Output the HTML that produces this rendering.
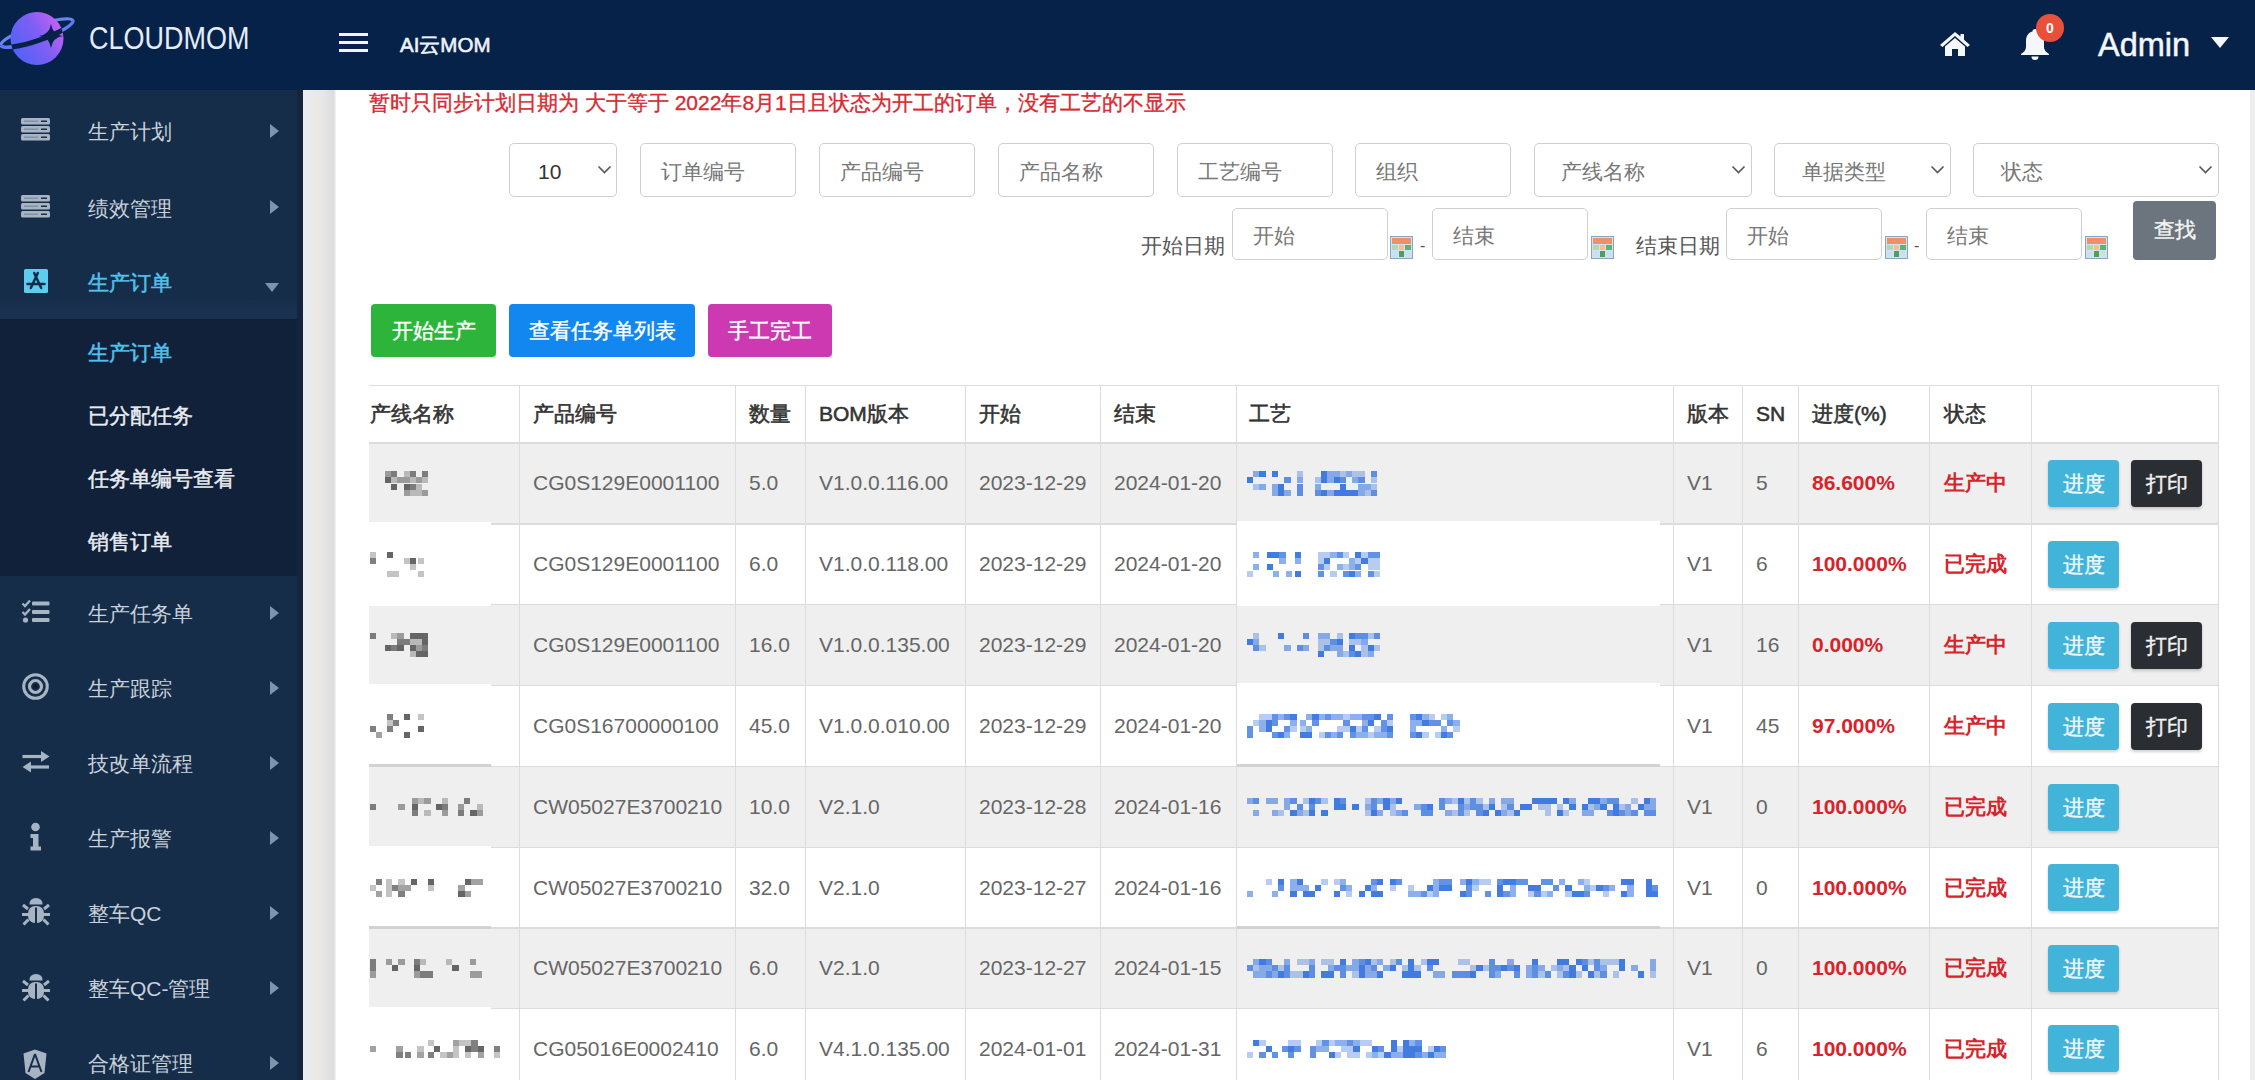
<!DOCTYPE html>
<html><head><meta charset="utf-8">
<style>
*{box-sizing:border-box;margin:0;padding:0}
html,body{width:2255px;height:1080px;overflow:hidden;background:#fff;font-family:"Liberation Sans",sans-serif}
.abs{position:absolute}
#hdr{position:absolute;left:0;top:0;width:2255px;height:90px;background:#072249}
#side{position:absolute;left:0;top:90px;width:303px;height:990px;background:#152d48}
#sub{position:absolute;left:0;top:319px;width:303px;height:257px;background:#11213a}
#gstrip{position:absolute;left:303px;top:90px;width:33px;height:990px;background:linear-gradient(to right,#e9edf1 0,#ebe8e4 40%,#e6e6e8 65%,#dcdcdc 92%,#f4f4f4 100%)}
#rstrip{position:absolute;left:2250px;top:90px;width:5px;height:990px;background:#ededed}
.mi{position:absolute;left:88px;font-size:21px;color:#c9d1db;white-space:nowrap;line-height:1}
.arr{position:absolute;left:270px;width:0;height:0;border-top:7px solid transparent;border-bottom:7px solid transparent;border-left:9px solid #7f93ab;margin-top:-1px}
.txt{position:absolute;white-space:nowrap;line-height:1}
.inp{position:absolute;height:54px;border:1.5px solid #cfcfcf;border-radius:5px;background:#fff;color:#777;font-size:21px;padding-left:20px;line-height:51px;padding-top:2px}
.btn{position:absolute;height:54px;border-radius:4px;color:#fff;font-size:21px;text-align:center;line-height:54px;-webkit-text-stroke:0.4px currentColor}
</style></head><body>

<div id="hdr">
 <svg class="abs" style="left:0;top:0" width="80" height="75" viewBox="0 0 80 75">
  <defs>
   <linearGradient id="lg" x1="0" y1="0.8" x2="1" y2="0.2">
    <stop offset="0" stop-color="#4d62f7"/><stop offset="0.55" stop-color="#7d5ff5"/><stop offset="1" stop-color="#cf60f0"/>
   </linearGradient>
   <clipPath id="pc"><circle cx="37" cy="38.5" r="26.5"/></clipPath>
  </defs>
  <g transform="translate(37,33) rotate(-19)">
   <path d="M -38 0 A 38 7.5 0 0 1 38 0" fill="none" stroke="#6a86f4" stroke-width="3.2"/>
  </g>
  <circle cx="37" cy="38.5" r="26.5" fill="url(#lg)"/>
  <g transform="translate(37,33) rotate(-19)">
   <path d="M -38 0 A 38 7.5 0 0 0 38 0" fill="none" stroke="#5d7cf4" stroke-width="3.4"/>
  </g>
  <g clip-path="url(#pc)"><g transform="translate(37,33) rotate(-19)">
   <path d="M -38 0 A 38 7.5 0 0 0 38 0" fill="none" stroke="#072249" stroke-width="5"/>
  </g></g>
  <path d="M51 24 Q52.5 34.5 63 36 Q52.5 37.5 51 48 Q49.5 37.5 39 36 Q49.5 34.5 51 24Z" fill="#072249"/>
 </svg>
 <div class="txt" style="left:88.5px;top:23px;font-size:30.5px;color:#e3ecf7;transform:scaleX(0.885);transform-origin:0 0">CLOUDMOM</div>
 <div class="abs" style="left:338.5px;top:32.5px;width:29px;height:3.2px;background:#f2f6fb"></div>
 <div class="abs" style="left:338.5px;top:40.5px;width:29px;height:3.2px;background:#f2f6fb"></div>
 <div class="abs" style="left:338.5px;top:48.5px;width:29px;height:3.2px;background:#f2f6fb"></div>
 <div class="txt" style="left:400px;top:35px;font-size:20.5px;color:#eef3fa;-webkit-text-stroke:0.6px #eef3fa">AI云MOM</div>
 <svg class="abs" style="left:1939px;top:31px" width="32" height="26" viewBox="0 0 32 26">
  <path d="M16 1 L1 14 L3.5 16 L16 5 L28.5 16 L31 14 L25 8.7 V3 H21.5 V5.6 Z" fill="#f4f7fb"/>
  <path d="M6 15.5 L16 7 L26 15.5 V25 H19 V18 H13 V25 H6 Z" fill="#f4f7fb"/>
 </svg>
 <svg class="abs" style="left:2018px;top:27px" width="34" height="34" viewBox="0 0 34 34">
  <path d="M17 2 C18.5 2 19.5 3 19.5 4.5 C24 5.5 26 9.5 26 14 V20 C26 23 28 25 31 27 V28 H3 V27 C6 25 8 23 8 20 V14 C8 9.5 10 5.5 14.5 4.5 C14.5 3 15.5 2 17 2Z" fill="#f4f7fb"/>
  <path d="M13.5 29.5 A3.5 3.5 0 0 0 20.5 29.5 Z" fill="#f4f7fb"/>
 </svg>
 <div class="abs" style="left:2036px;top:14px;width:28px;height:28px;border-radius:50%;background:#e8503a;color:#fff;font-size:14px;font-weight:bold;text-align:center;line-height:28px">0</div>
 <div class="txt" style="left:2098px;top:29px;font-size:32.5px;color:#f4f7fb;-webkit-text-stroke:0.5px #f4f7fb">Admin</div>
 <div class="abs" style="left:2211px;top:37px;width:0;height:0;border-left:9px solid transparent;border-right:9px solid transparent;border-top:11px solid #f4f7fb"></div>
</div>

<div id="side"></div>
<div class="abs" style="left:0;top:300px;width:303px;height:19px;background:linear-gradient(#172f4c,#1a3352)"></div><div id="sub"></div>
<svg class="abs" style="left:21px;top:118px" width="29" height="23" viewBox="0 0 29 23"><rect x="0" y="0" width="29" height="6.5" rx="1.5" fill="#a6b4c4"/><rect x="20" y="2.5" width="6" height="1.5" fill="#172d48"/><rect x="3" y="2.5" width="14" height="1.5" fill="#172d48" opacity="0.25"/><rect x="0" y="8" width="29" height="6.5" rx="1.5" fill="#a6b4c4"/><rect x="20" y="10.5" width="6" height="1.5" fill="#172d48"/><rect x="3" y="10.5" width="14" height="1.5" fill="#172d48" opacity="0.25"/><rect x="0" y="16" width="29" height="6.5" rx="1.5" fill="#a6b4c4"/><rect x="20" y="18.5" width="6" height="1.5" fill="#172d48"/><rect x="3" y="18.5" width="14" height="1.5" fill="#172d48" opacity="0.25"/></svg><div class="mi" style="top:121px">生产计划</div><div class="arr" style="top:125px"></div>
<svg class="abs" style="left:21px;top:195px" width="29" height="23" viewBox="0 0 29 23"><rect x="0" y="0" width="29" height="6.5" rx="1.5" fill="#a6b4c4"/><rect x="20" y="2.5" width="6" height="1.5" fill="#172d48"/><rect x="3" y="2.5" width="14" height="1.5" fill="#172d48" opacity="0.25"/><rect x="0" y="8" width="29" height="6.5" rx="1.5" fill="#a6b4c4"/><rect x="20" y="10.5" width="6" height="1.5" fill="#172d48"/><rect x="3" y="10.5" width="14" height="1.5" fill="#172d48" opacity="0.25"/><rect x="0" y="16" width="29" height="6.5" rx="1.5" fill="#a6b4c4"/><rect x="20" y="18.5" width="6" height="1.5" fill="#172d48"/><rect x="3" y="18.5" width="14" height="1.5" fill="#172d48" opacity="0.25"/></svg><div class="mi" style="top:197.5px">绩效管理</div><div class="arr" style="top:201px"></div>
<svg class="abs" style="left:24px;top:269px" width="24" height="24" viewBox="0 0 24 24"><rect width="24" height="24" rx="1.5" fill="#5ccdee"/>
<path d="M10.2 4 L17.2 19 M13.8 4 L6.8 19 M3.5 15 H20.5" stroke="#0f2a4a" stroke-width="2.5" fill="none" stroke-linecap="round"/></svg>
<div class="mi" style="top:272px;color:#52c0ec;-webkit-text-stroke:0.5px #52c0ec">生产订单</div>
<div class="abs" style="left:265px;top:283px;width:0;height:0;border-left:7.5px solid transparent;border-right:7.5px solid transparent;border-top:9px solid #7f93aa"></div>
<div class="mi" style="top:342px;color:#52c0ec;-webkit-text-stroke:0.5px #52c0ec">生产订单</div>
<div class="mi" style="top:405px;color:#e9edf2;-webkit-text-stroke:0.45px #e9edf2">已分配任务</div>
<div class="mi" style="top:468px;color:#e9edf2;-webkit-text-stroke:0.45px #e9edf2">任务单编号查看</div>
<div class="mi" style="top:531px;color:#e9edf2;-webkit-text-stroke:0.45px #e9edf2">销售订单</div>
<div class="mi" style="top:603px">生产任务单</div><div class="arr" style="top:607px"></div>
<div class="mi" style="top:678px">生产跟踪</div><div class="arr" style="top:682px"></div>
<div class="mi" style="top:753px">技改单流程</div><div class="arr" style="top:757px"></div>
<div class="mi" style="top:828px">生产报警</div><div class="arr" style="top:832px"></div>
<div class="mi" style="top:903px">整车QC</div><div class="arr" style="top:907px"></div>
<div class="mi" style="top:978px">整车QC-管理</div><div class="arr" style="top:982px"></div>
<div class="mi" style="top:1053px">合格证管理</div><div class="arr" style="top:1057px"></div>

<svg class="abs" style="left:21px;top:599px" width="30" height="26" viewBox="0 0 30 26">
 <path d="M1.5 4.5 L4 7 L9 1.5" stroke="#a6b4c4" stroke-width="2.3" fill="none"/>
 <path d="M1.5 13 L4 15.5 L9 10" stroke="#a6b4c4" stroke-width="2.3" fill="none"/>
 <circle cx="4.5" cy="21" r="2.6" fill="#a6b4c4"/>
 <rect x="11" y="2.5" width="17.5" height="4" rx="1" fill="#a6b4c4"/>
 <rect x="11" y="11" width="17.5" height="4" rx="1" fill="#a6b4c4"/>
 <rect x="11" y="19" width="17.5" height="4" rx="1" fill="#a6b4c4"/>
</svg>
<svg class="abs" style="left:21px;top:672px" width="29" height="29" viewBox="0 0 29 29">
 <circle cx="14.5" cy="14.5" r="11.8" stroke="#a6b4c4" stroke-width="3" fill="none"/>
 <circle cx="14.5" cy="14.5" r="6" stroke="#a6b4c4" stroke-width="3.2" fill="none"/>
 <circle cx="14.5" cy="14.5" r="2.5" fill="#0f1c2e"/>
</svg>
<svg class="abs" style="left:21px;top:750px" width="30" height="24" viewBox="0 0 30 24">
 <path d="M1.5 6.5 H21" stroke="#a6b4c4" stroke-width="3.2"/>
 <path d="M20 1 L28.5 6.5 L20 12 Z" fill="#a6b4c4"/>
 <path d="M8.5 17 H28" stroke="#a6b4c4" stroke-width="3.2"/>
 <path d="M10 11.5 L1.5 17 L10 22.5 Z" fill="#a6b4c4"/>
</svg>
<svg class="abs" style="left:29px;top:822px" width="14" height="30" viewBox="0 0 14 30">
 <circle cx="6.5" cy="5" r="4.3" fill="#a6b4c4"/>
 <path d="M1.5 12 H9.5 V24.5 H12 V28.5 H1.5 V24.5 H4 V16 H1.5 Z" fill="#a6b4c4"/>
</svg>
<svg class="abs" style="left:21px;top:897px" width="30" height="30" viewBox="0 0 30 30">
 <path d="M8.5 7.5 Q8.5 1 15 1 Q21.5 1 21.5 7.5 Z" fill="#a6b4c4"/>
 <rect x="7" y="9" width="16" height="17" rx="7" fill="#a6b4c4"/>
 <path d="M7 12 L2 8 M7 17.5 H1 M7.5 22.5 L2.5 27.5 M23 12 L28 8 M23 17.5 H29 M22.5 22.5 L27.5 27.5" stroke="#a6b4c4" stroke-width="3"/>
 <path d="M15 10.5 V27" stroke="#172d48" stroke-width="2"/>
</svg><svg class="abs" style="left:21px;top:973px" width="30" height="30" viewBox="0 0 30 30">
 <path d="M8.5 7.5 Q8.5 1 15 1 Q21.5 1 21.5 7.5 Z" fill="#a6b4c4"/>
 <rect x="7" y="9" width="16" height="17" rx="7" fill="#a6b4c4"/>
 <path d="M7 12 L2 8 M7 17.5 H1 M7.5 22.5 L2.5 27.5 M23 12 L28 8 M23 17.5 H29 M22.5 22.5 L27.5 27.5" stroke="#a6b4c4" stroke-width="3"/>
 <path d="M15 10.5 V27" stroke="#172d48" stroke-width="2"/>
</svg><svg class="abs" style="left:23px;top:1049px" width="24" height="31" viewBox="0 0 24 31">
 <path d="M12 0.5 L23.5 4.5 L21.5 24 L12 30 L2.5 24 L0.5 4.5 Z" fill="#a6b4c4"/>
 <path d="M12 5 L5.5 23 M12 5 L18.5 23 M7.5 17.5 H16.5" stroke="#172d48" stroke-width="2" fill="none"/>
</svg>
<div class="abs" style="left:297px;top:90px;width:6px;height:990px;background:#13263c"></div><div id="gstrip"></div>
<div id="rstrip"></div>

<div class="txt" style="left:369px;top:92px;font-size:21px;color:#d92a32;-webkit-text-stroke:0.35px #d92a32">暂时只同步计划日期为 大于等于 2022年8月1日且状态为开工的订单，没有工艺的不显示</div>
<div class="inp" style="left:509px;top:143px;width:108px;color:#333;padding-left:28px">10</div><svg class="abs" style="left:597px;top:165px" width="15" height="10" viewBox="0 0 15 10"><path d="M1.5 1.5 L7.5 7.5 L13.5 1.5" stroke="#5a5a5a" stroke-width="1.7" fill="none"/></svg><div class="inp" style="left:640px;top:143px;width:156px">订单编号</div><div class="inp" style="left:819px;top:143px;width:156px">产品编号</div><div class="inp" style="left:998px;top:143px;width:156px">产品名称</div><div class="inp" style="left:1177px;top:143px;width:156px">工艺编号</div><div class="inp" style="left:1355px;top:143px;width:156px">组织</div><div class="inp" style="left:1534px;top:143px;width:218px;padding-left:26px">产线名称</div><svg class="abs" style="left:1731px;top:165px" width="15" height="10" viewBox="0 0 15 10"><path d="M1.5 1.5 L7.5 7.5 L13.5 1.5" stroke="#5a5a5a" stroke-width="1.7" fill="none"/></svg><div class="inp" style="left:1774px;top:143px;width:177px;padding-left:27px">单据类型</div><svg class="abs" style="left:1930px;top:165px" width="15" height="10" viewBox="0 0 15 10"><path d="M1.5 1.5 L7.5 7.5 L13.5 1.5" stroke="#5a5a5a" stroke-width="1.7" fill="none"/></svg><div class="inp" style="left:1973px;top:143px;width:246px;padding-left:27px">状态</div><svg class="abs" style="left:2198px;top:165px" width="15" height="10" viewBox="0 0 15 10"><path d="M1.5 1.5 L7.5 7.5 L13.5 1.5" stroke="#5a5a5a" stroke-width="1.7" fill="none"/></svg>
<div class="txt" style="left:1141px;top:235px;font-size:21px;color:#555">开始日期</div><div class="inp" style="left:1232px;top:208px;width:156px;height:52px;line-height:50px;padding-top:2px">开始</div><svg class="abs" style="left:1390px;top:236px" width="23" height="23" viewBox="0 0 23 23">
<rect x="0.5" y="0.5" width="22" height="22" fill="#cfe3f2" stroke="#8aa6bf"/>
<rect x="2" y="2" width="19" height="6" fill="#f0906a"/>
<rect x="2" y="9" width="6" height="5" fill="#b6d8a8"/><rect x="9" y="9" width="5" height="5" fill="#f4c27a"/><rect x="15" y="9" width="6" height="5" fill="#5fb36a"/>
<rect x="2" y="15" width="6" height="6" fill="#c9e0ee"/><rect x="9" y="15" width="5" height="6" fill="#4f9f5a"/><rect x="15" y="15" width="6" height="6" fill="#c9e0ee"/>
</svg><div class="txt" style="left:1420px;top:238px;font-size:16px;color:#555">-</div><div class="inp" style="left:1432px;top:208px;width:156px;height:52px;line-height:50px;padding-top:2px">结束</div><svg class="abs" style="left:1591px;top:236px" width="23" height="23" viewBox="0 0 23 23">
<rect x="0.5" y="0.5" width="22" height="22" fill="#cfe3f2" stroke="#8aa6bf"/>
<rect x="2" y="2" width="19" height="6" fill="#f0906a"/>
<rect x="2" y="9" width="6" height="5" fill="#b6d8a8"/><rect x="9" y="9" width="5" height="5" fill="#f4c27a"/><rect x="15" y="9" width="6" height="5" fill="#5fb36a"/>
<rect x="2" y="15" width="6" height="6" fill="#c9e0ee"/><rect x="9" y="15" width="5" height="6" fill="#4f9f5a"/><rect x="15" y="15" width="6" height="6" fill="#c9e0ee"/>
</svg><div class="txt" style="left:1636px;top:235px;font-size:21px;color:#555">结束日期</div><div class="inp" style="left:1726px;top:208px;width:156px;height:52px;line-height:50px;padding-top:2px">开始</div><svg class="abs" style="left:1885px;top:236px" width="23" height="23" viewBox="0 0 23 23">
<rect x="0.5" y="0.5" width="22" height="22" fill="#cfe3f2" stroke="#8aa6bf"/>
<rect x="2" y="2" width="19" height="6" fill="#f0906a"/>
<rect x="2" y="9" width="6" height="5" fill="#b6d8a8"/><rect x="9" y="9" width="5" height="5" fill="#f4c27a"/><rect x="15" y="9" width="6" height="5" fill="#5fb36a"/>
<rect x="2" y="15" width="6" height="6" fill="#c9e0ee"/><rect x="9" y="15" width="5" height="6" fill="#4f9f5a"/><rect x="15" y="15" width="6" height="6" fill="#c9e0ee"/>
</svg><div class="txt" style="left:1914px;top:238px;font-size:16px;color:#555">-</div><div class="inp" style="left:1926px;top:208px;width:156px;height:52px;line-height:50px;padding-top:2px">结束</div><svg class="abs" style="left:2085px;top:236px" width="23" height="23" viewBox="0 0 23 23">
<rect x="0.5" y="0.5" width="22" height="22" fill="#cfe3f2" stroke="#8aa6bf"/>
<rect x="2" y="2" width="19" height="6" fill="#f0906a"/>
<rect x="2" y="9" width="6" height="5" fill="#b6d8a8"/><rect x="9" y="9" width="5" height="5" fill="#f4c27a"/><rect x="15" y="9" width="6" height="5" fill="#5fb36a"/>
<rect x="2" y="15" width="6" height="6" fill="#c9e0ee"/><rect x="9" y="15" width="5" height="6" fill="#4f9f5a"/><rect x="15" y="15" width="6" height="6" fill="#c9e0ee"/>
</svg><div class="btn" style="left:2133px;top:201px;width:83px;height:59px;line-height:58px;background:#6c757d;color:#f4f4f4">查找</div>
<div class="btn" style="left:371px;top:304px;width:125px;height:53px;line-height:53px;background:#2cb53a">开始生产</div><div class="btn" style="left:509px;top:304px;width:186px;height:53px;line-height:53px;background:#1187ef">查看任务单列表</div><div class="btn" style="left:708px;top:304px;width:124px;height:53px;line-height:53px;background:#cc39b1">手工完工</div>

<!--TABLE-->
<style>.tc{position:absolute;white-space:nowrap;line-height:1;font-size:21px;color:#666}.th{position:absolute;white-space:nowrap;line-height:1;font-size:21px;color:#333;-webkit-text-stroke:0.55px #333}.rd{color:#d8232a;font-weight:bold}.sb{position:absolute;height:47px;width:71px;border-radius:4px;color:#eef8fc;font-size:21px;text-align:center;line-height:47px;box-shadow:0 2px 3px rgba(0,0,0,0.18);-webkit-text-stroke:0.4px currentColor}.m{position:absolute}</style>
<div class="abs" style="left:369px;top:385px;width:1849px;height:58px;background:#fff;border-top:1.5px solid #dedede"></div>
<div class="abs" style="left:369px;top:443px;width:1849px;height:81px;background:#efefef"></div>
<div class="abs" style="left:369px;top:524px;width:1849px;height:80.5px;background:#ffffff"></div>
<div class="abs" style="left:369px;top:604.5px;width:1849px;height:81.0px;background:#efefef"></div>
<div class="abs" style="left:369px;top:685.5px;width:1849px;height:81.0px;background:#ffffff"></div>
<div class="abs" style="left:369px;top:766.5px;width:1849px;height:81.0px;background:#efefef"></div>
<div class="abs" style="left:369px;top:847.5px;width:1849px;height:80.5px;background:#ffffff"></div>
<div class="abs" style="left:369px;top:928px;width:1849px;height:80.5px;background:#efefef"></div>
<div class="abs" style="left:369px;top:1008.5px;width:1849px;height:80.5px;background:#ffffff"></div>
<div class="abs" style="left:369px;top:442px;width:1849px;height:1.5px;background:#dcdcdc"></div>
<div class="abs" style="left:369px;top:523px;width:1849px;height:1.5px;background:#dcdcdc"></div>
<div class="abs" style="left:369px;top:603.5px;width:1849px;height:1.5px;background:#dcdcdc"></div>
<div class="abs" style="left:369px;top:684.5px;width:1849px;height:1.5px;background:#dcdcdc"></div>
<div class="abs" style="left:369px;top:765.5px;width:1849px;height:1.5px;background:#dcdcdc"></div>
<div class="abs" style="left:369px;top:846.5px;width:1849px;height:1.5px;background:#dcdcdc"></div>
<div class="abs" style="left:369px;top:927px;width:1849px;height:1.5px;background:#dcdcdc"></div>
<div class="abs" style="left:369px;top:1007.5px;width:1849px;height:1.5px;background:#dcdcdc"></div>
<div class="abs" style="left:518.5px;top:385px;width:1.5px;height:700px;background:#dcdcdc"></div>
<div class="abs" style="left:734.5px;top:385px;width:1.5px;height:700px;background:#dcdcdc"></div>
<div class="abs" style="left:804.5px;top:385px;width:1.5px;height:700px;background:#dcdcdc"></div>
<div class="abs" style="left:964.5px;top:385px;width:1.5px;height:700px;background:#dcdcdc"></div>
<div class="abs" style="left:1099.5px;top:385px;width:1.5px;height:700px;background:#dcdcdc"></div>
<div class="abs" style="left:1235.5px;top:385px;width:1.5px;height:700px;background:#dcdcdc"></div>
<div class="abs" style="left:1672.5px;top:385px;width:1.5px;height:700px;background:#dcdcdc"></div>
<div class="abs" style="left:1741.5px;top:385px;width:1.5px;height:700px;background:#dcdcdc"></div>
<div class="abs" style="left:1797.5px;top:385px;width:1.5px;height:700px;background:#dcdcdc"></div>
<div class="abs" style="left:1928.5px;top:385px;width:1.5px;height:700px;background:#dcdcdc"></div>
<div class="abs" style="left:2030.5px;top:385px;width:1.5px;height:700px;background:#dcdcdc"></div>
<div class="abs" style="left:2217.5px;top:385px;width:1.5px;height:700px;background:#dcdcdc"></div>
<div class="th" style="left:370px;top:403px">产线名称</div>
<div class="th" style="left:533px;top:403px">产品编号</div>
<div class="th" style="left:749px;top:403px">数量</div>
<div class="th" style="left:819px;top:403px">BOM版本</div>
<div class="th" style="left:979px;top:403px">开始</div>
<div class="th" style="left:1114px;top:403px">结束</div>
<div class="th" style="left:1249px;top:403px">工艺</div>
<div class="th" style="left:1687px;top:403px">版本</div>
<div class="th" style="left:1756px;top:403px">SN</div>
<div class="th" style="left:1812px;top:403px">进度(%)</div>
<div class="th" style="left:1944px;top:403px">状态</div>
<div class="tc" style="left:533px;top:472px">CG0S129E0001100</div>
<div class="tc" style="left:749px;top:472px">5.0</div>
<div class="tc" style="left:819px;top:472px">V1.0.0.116.00</div>
<div class="tc" style="left:979px;top:472px">2023-12-29</div>
<div class="tc" style="left:1114px;top:472px">2024-01-20</div>
<div class="tc" style="left:1687px;top:472px">V1</div>
<div class="tc" style="left:1756px;top:472px">5</div>
<div class="tc rd" style="left:1812px;top:472px">86.600%</div>
<div class="tc rd" style="left:1944px;top:472px">生产中</div>
<div class="sb" style="left:2048px;top:460.0px;background:#42b4da">进度</div>
<div class="sb" style="left:2131px;top:460.0px;background:#2a2e33;color:#f2f2f2">打印</div>
<div class="m" style="left:385.0px;top:471.1px;width:6.2px;height:6.2px;background:rgba(85,85,85,0.55)"></div><div class="m" style="left:385.0px;top:477.3px;width:6.2px;height:6.2px;background:rgba(85,85,85,0.9)"></div><div class="m" style="left:391.2px;top:471.1px;width:6.2px;height:6.2px;background:rgba(85,85,85,0.75)"></div><div class="m" style="left:391.2px;top:477.3px;width:6.2px;height:6.2px;background:rgba(85,85,85,0.35)"></div><div class="m" style="left:391.2px;top:483.5px;width:6.2px;height:6.2px;background:rgba(85,85,85,0.9)"></div><div class="m" style="left:397.4px;top:477.3px;width:6.2px;height:6.2px;background:rgba(85,85,85,0.55)"></div><div class="m" style="left:403.6px;top:471.1px;width:6.2px;height:6.2px;background:rgba(85,85,85,0.35)"></div><div class="m" style="left:403.6px;top:477.3px;width:6.2px;height:6.2px;background:rgba(85,85,85,0.55)"></div><div class="m" style="left:403.6px;top:483.5px;width:6.2px;height:6.2px;background:rgba(85,85,85,0.9)"></div><div class="m" style="left:403.6px;top:489.7px;width:6.2px;height:6.2px;background:rgba(85,85,85,0.55)"></div><div class="m" style="left:409.8px;top:471.1px;width:6.2px;height:6.2px;background:rgba(85,85,85,0.75)"></div><div class="m" style="left:409.8px;top:477.3px;width:6.2px;height:6.2px;background:rgba(85,85,85,0.35)"></div><div class="m" style="left:409.8px;top:483.5px;width:6.2px;height:6.2px;background:rgba(85,85,85,0.75)"></div><div class="m" style="left:409.8px;top:489.7px;width:6.2px;height:6.2px;background:rgba(85,85,85,0.35)"></div><div class="m" style="left:416.0px;top:477.3px;width:6.2px;height:6.2px;background:rgba(85,85,85,0.55)"></div><div class="m" style="left:416.0px;top:483.5px;width:6.2px;height:6.2px;background:rgba(85,85,85,0.35)"></div><div class="m" style="left:416.0px;top:489.7px;width:6.2px;height:6.2px;background:rgba(85,85,85,0.35)"></div><div class="m" style="left:422.2px;top:471.1px;width:6.2px;height:6.2px;background:rgba(85,85,85,0.75)"></div><div class="m" style="left:422.2px;top:477.3px;width:6.2px;height:6.2px;background:rgba(85,85,85,0.35)"></div><div class="m" style="left:422.2px;top:489.7px;width:6.2px;height:6.2px;background:rgba(85,85,85,0.55)"></div>
<div class="m" style="left:1247.0px;top:477.3px;width:6.2px;height:6.2px;background:rgba(45,110,222,0.9)"></div><div class="m" style="left:1253.2px;top:471.1px;width:6.2px;height:6.2px;background:rgba(45,110,222,0.55)"></div><div class="m" style="left:1253.2px;top:483.5px;width:6.2px;height:6.2px;background:rgba(45,110,222,0.35)"></div><div class="m" style="left:1259.4px;top:471.1px;width:6.2px;height:6.2px;background:rgba(45,110,222,0.9)"></div><div class="m" style="left:1259.4px;top:483.5px;width:6.2px;height:6.2px;background:rgba(45,110,222,0.55)"></div><div class="m" style="left:1272.0px;top:471.1px;width:6.2px;height:6.2px;background:rgba(45,110,222,0.9)"></div><div class="m" style="left:1272.0px;top:483.5px;width:6.2px;height:6.2px;background:rgba(45,110,222,0.55)"></div><div class="m" style="left:1272.0px;top:489.7px;width:6.2px;height:6.2px;background:rgba(45,110,222,0.55)"></div><div class="m" style="left:1278.2px;top:483.5px;width:6.2px;height:6.2px;background:rgba(45,110,222,0.9)"></div><div class="m" style="left:1278.2px;top:489.7px;width:6.2px;height:6.2px;background:rgba(45,110,222,0.9)"></div><div class="m" style="left:1284.4px;top:477.3px;width:6.2px;height:6.2px;background:rgba(45,110,222,0.75)"></div><div class="m" style="left:1284.4px;top:489.7px;width:6.2px;height:6.2px;background:rgba(45,110,222,0.55)"></div><div class="m" style="left:1297.0px;top:471.1px;width:6.2px;height:6.2px;background:rgba(45,110,222,0.35)"></div><div class="m" style="left:1297.0px;top:477.3px;width:6.2px;height:6.2px;background:rgba(45,110,222,0.55)"></div><div class="m" style="left:1297.0px;top:483.5px;width:6.2px;height:6.2px;background:rgba(45,110,222,0.75)"></div><div class="m" style="left:1297.0px;top:489.7px;width:6.2px;height:6.2px;background:rgba(45,110,222,0.75)"></div><div class="m" style="left:1315.0px;top:477.3px;width:6.2px;height:6.2px;background:rgba(45,110,222,0.35)"></div><div class="m" style="left:1315.0px;top:483.5px;width:6.2px;height:6.2px;background:rgba(45,110,222,0.55)"></div><div class="m" style="left:1315.0px;top:489.7px;width:6.2px;height:6.2px;background:rgba(45,110,222,0.75)"></div><div class="m" style="left:1321.2px;top:471.1px;width:6.2px;height:6.2px;background:rgba(45,110,222,0.9)"></div><div class="m" style="left:1321.2px;top:477.3px;width:6.2px;height:6.2px;background:rgba(45,110,222,0.9)"></div><div class="m" style="left:1321.2px;top:489.7px;width:6.2px;height:6.2px;background:rgba(45,110,222,0.9)"></div><div class="m" style="left:1327.4px;top:471.1px;width:6.2px;height:6.2px;background:rgba(45,110,222,0.55)"></div><div class="m" style="left:1327.4px;top:477.3px;width:6.2px;height:6.2px;background:rgba(45,110,222,0.55)"></div><div class="m" style="left:1327.4px;top:489.7px;width:6.2px;height:6.2px;background:rgba(45,110,222,0.55)"></div><div class="m" style="left:1333.6px;top:471.1px;width:6.2px;height:6.2px;background:rgba(45,110,222,0.55)"></div><div class="m" style="left:1333.6px;top:477.3px;width:6.2px;height:6.2px;background:rgba(45,110,222,0.9)"></div><div class="m" style="left:1333.6px;top:489.7px;width:6.2px;height:6.2px;background:rgba(45,110,222,0.9)"></div><div class="m" style="left:1339.8px;top:471.1px;width:6.2px;height:6.2px;background:rgba(45,110,222,0.35)"></div><div class="m" style="left:1339.8px;top:477.3px;width:6.2px;height:6.2px;background:rgba(45,110,222,0.75)"></div><div class="m" style="left:1339.8px;top:483.5px;width:6.2px;height:6.2px;background:rgba(45,110,222,0.9)"></div><div class="m" style="left:1339.8px;top:489.7px;width:6.2px;height:6.2px;background:rgba(45,110,222,0.9)"></div><div class="m" style="left:1346.0px;top:471.1px;width:6.2px;height:6.2px;background:rgba(45,110,222,0.55)"></div><div class="m" style="left:1346.0px;top:489.7px;width:6.2px;height:6.2px;background:rgba(45,110,222,0.9)"></div><div class="m" style="left:1352.2px;top:471.1px;width:6.2px;height:6.2px;background:rgba(45,110,222,0.35)"></div><div class="m" style="left:1352.2px;top:477.3px;width:6.2px;height:6.2px;background:rgba(45,110,222,0.55)"></div><div class="m" style="left:1352.2px;top:489.7px;width:6.2px;height:6.2px;background:rgba(45,110,222,0.9)"></div><div class="m" style="left:1358.4px;top:471.1px;width:6.2px;height:6.2px;background:rgba(45,110,222,0.35)"></div><div class="m" style="left:1358.4px;top:477.3px;width:6.2px;height:6.2px;background:rgba(45,110,222,0.75)"></div><div class="m" style="left:1358.4px;top:483.5px;width:6.2px;height:6.2px;background:rgba(45,110,222,0.55)"></div><div class="m" style="left:1358.4px;top:489.7px;width:6.2px;height:6.2px;background:rgba(45,110,222,0.55)"></div><div class="m" style="left:1364.6px;top:483.5px;width:6.2px;height:6.2px;background:rgba(45,110,222,0.55)"></div><div class="m" style="left:1364.6px;top:489.7px;width:6.2px;height:6.2px;background:rgba(45,110,222,0.35)"></div><div class="m" style="left:1370.8px;top:471.1px;width:6.2px;height:6.2px;background:rgba(45,110,222,0.75)"></div><div class="m" style="left:1370.8px;top:477.3px;width:6.2px;height:6.2px;background:rgba(45,110,222,0.35)"></div><div class="m" style="left:1370.8px;top:483.5px;width:6.2px;height:6.2px;background:rgba(45,110,222,0.35)"></div><div class="m" style="left:1370.8px;top:489.7px;width:6.2px;height:6.2px;background:rgba(45,110,222,0.75)"></div>
<div class="tc" style="left:533px;top:553px">CG0S129E0001100</div>
<div class="tc" style="left:749px;top:553px">6.0</div>
<div class="tc" style="left:819px;top:553px">V1.0.0.118.00</div>
<div class="tc" style="left:979px;top:553px">2023-12-29</div>
<div class="tc" style="left:1114px;top:553px">2024-01-20</div>
<div class="tc" style="left:1687px;top:553px">V1</div>
<div class="tc" style="left:1756px;top:553px">6</div>
<div class="tc rd" style="left:1812px;top:553px">100.000%</div>
<div class="tc rd" style="left:1944px;top:553px">已完成</div>
<div class="sb" style="left:2048px;top:540.75px;background:#42b4da">进度</div>
<div class="m" style="left:370.0px;top:551.9px;width:6.2px;height:6.2px;background:rgba(85,85,85,0.35)"></div><div class="m" style="left:370.0px;top:558.1px;width:6.2px;height:6.2px;background:rgba(85,85,85,0.75)"></div><div class="m" style="left:387.0px;top:551.9px;width:6.2px;height:6.2px;background:rgba(85,85,85,0.9)"></div><div class="m" style="left:387.0px;top:570.5px;width:6.2px;height:6.2px;background:rgba(85,85,85,0.35)"></div><div class="m" style="left:393.2px;top:570.5px;width:6.2px;height:6.2px;background:rgba(85,85,85,0.35)"></div><div class="m" style="left:404.0px;top:558.1px;width:6.2px;height:6.2px;background:rgba(85,85,85,0.35)"></div><div class="m" style="left:410.2px;top:558.1px;width:6.2px;height:6.2px;background:rgba(85,85,85,0.9)"></div><div class="m" style="left:410.2px;top:564.2px;width:6.2px;height:6.2px;background:rgba(85,85,85,0.35)"></div><div class="m" style="left:418.0px;top:558.1px;width:6.2px;height:6.2px;background:rgba(85,85,85,0.35)"></div><div class="m" style="left:418.0px;top:570.5px;width:6.2px;height:6.2px;background:rgba(85,85,85,0.35)"></div>
<div class="m" style="left:1247.0px;top:570.5px;width:6.2px;height:6.2px;background:rgba(45,110,222,0.35)"></div><div class="m" style="left:1253.2px;top:551.9px;width:6.2px;height:6.2px;background:rgba(45,110,222,0.55)"></div><div class="m" style="left:1253.2px;top:564.2px;width:6.2px;height:6.2px;background:rgba(45,110,222,0.55)"></div><div class="m" style="left:1267.0px;top:551.9px;width:6.2px;height:6.2px;background:rgba(45,110,222,0.9)"></div><div class="m" style="left:1267.0px;top:564.2px;width:6.2px;height:6.2px;background:rgba(45,110,222,0.9)"></div><div class="m" style="left:1273.2px;top:551.9px;width:6.2px;height:6.2px;background:rgba(45,110,222,0.9)"></div><div class="m" style="left:1273.2px;top:570.5px;width:6.2px;height:6.2px;background:rgba(45,110,222,0.55)"></div><div class="m" style="left:1279.4px;top:551.9px;width:6.2px;height:6.2px;background:rgba(45,110,222,0.75)"></div><div class="m" style="left:1279.4px;top:558.1px;width:6.2px;height:6.2px;background:rgba(45,110,222,0.55)"></div><div class="m" style="left:1285.6px;top:570.5px;width:6.2px;height:6.2px;background:rgba(45,110,222,0.55)"></div><div class="m" style="left:1295.0px;top:551.9px;width:6.2px;height:6.2px;background:rgba(45,110,222,0.9)"></div><div class="m" style="left:1295.0px;top:558.1px;width:6.2px;height:6.2px;background:rgba(45,110,222,0.55)"></div><div class="m" style="left:1295.0px;top:570.5px;width:6.2px;height:6.2px;background:rgba(45,110,222,0.9)"></div><div class="m" style="left:1318.0px;top:551.9px;width:6.2px;height:6.2px;background:rgba(45,110,222,0.35)"></div><div class="m" style="left:1318.0px;top:558.1px;width:6.2px;height:6.2px;background:rgba(45,110,222,0.35)"></div><div class="m" style="left:1318.0px;top:564.2px;width:6.2px;height:6.2px;background:rgba(45,110,222,0.75)"></div><div class="m" style="left:1318.0px;top:570.5px;width:6.2px;height:6.2px;background:rgba(45,110,222,0.75)"></div><div class="m" style="left:1324.2px;top:551.9px;width:6.2px;height:6.2px;background:rgba(45,110,222,0.35)"></div><div class="m" style="left:1324.2px;top:558.1px;width:6.2px;height:6.2px;background:rgba(45,110,222,0.9)"></div><div class="m" style="left:1324.2px;top:564.2px;width:6.2px;height:6.2px;background:rgba(45,110,222,0.35)"></div><div class="m" style="left:1330.4px;top:551.9px;width:6.2px;height:6.2px;background:rgba(45,110,222,0.55)"></div><div class="m" style="left:1330.4px;top:570.5px;width:6.2px;height:6.2px;background:rgba(45,110,222,0.35)"></div><div class="m" style="left:1336.6px;top:551.9px;width:6.2px;height:6.2px;background:rgba(45,110,222,0.75)"></div><div class="m" style="left:1336.6px;top:564.2px;width:6.2px;height:6.2px;background:rgba(45,110,222,0.55)"></div><div class="m" style="left:1342.8px;top:551.9px;width:6.2px;height:6.2px;background:rgba(45,110,222,0.35)"></div><div class="m" style="left:1342.8px;top:564.2px;width:6.2px;height:6.2px;background:rgba(45,110,222,0.35)"></div><div class="m" style="left:1342.8px;top:570.5px;width:6.2px;height:6.2px;background:rgba(45,110,222,0.75)"></div><div class="m" style="left:1349.0px;top:558.1px;width:6.2px;height:6.2px;background:rgba(45,110,222,0.55)"></div><div class="m" style="left:1349.0px;top:564.2px;width:6.2px;height:6.2px;background:rgba(45,110,222,0.55)"></div><div class="m" style="left:1349.0px;top:570.5px;width:6.2px;height:6.2px;background:rgba(45,110,222,0.9)"></div><div class="m" style="left:1355.2px;top:551.9px;width:6.2px;height:6.2px;background:rgba(45,110,222,0.9)"></div><div class="m" style="left:1355.2px;top:558.1px;width:6.2px;height:6.2px;background:rgba(45,110,222,0.35)"></div><div class="m" style="left:1355.2px;top:564.2px;width:6.2px;height:6.2px;background:rgba(45,110,222,0.75)"></div><div class="m" style="left:1355.2px;top:570.5px;width:6.2px;height:6.2px;background:rgba(45,110,222,0.55)"></div><div class="m" style="left:1361.4px;top:551.9px;width:6.2px;height:6.2px;background:rgba(45,110,222,0.35)"></div><div class="m" style="left:1361.4px;top:558.1px;width:6.2px;height:6.2px;background:rgba(45,110,222,0.9)"></div><div class="m" style="left:1367.6px;top:551.9px;width:6.2px;height:6.2px;background:rgba(45,110,222,0.75)"></div><div class="m" style="left:1367.6px;top:558.1px;width:6.2px;height:6.2px;background:rgba(45,110,222,0.35)"></div><div class="m" style="left:1367.6px;top:564.2px;width:6.2px;height:6.2px;background:rgba(45,110,222,0.35)"></div><div class="m" style="left:1367.6px;top:570.5px;width:6.2px;height:6.2px;background:rgba(45,110,222,0.75)"></div><div class="m" style="left:1373.8px;top:551.9px;width:6.2px;height:6.2px;background:rgba(45,110,222,0.75)"></div><div class="m" style="left:1373.8px;top:558.1px;width:6.2px;height:6.2px;background:rgba(45,110,222,0.35)"></div><div class="m" style="left:1373.8px;top:564.2px;width:6.2px;height:6.2px;background:rgba(45,110,222,0.35)"></div><div class="m" style="left:1373.8px;top:570.5px;width:6.2px;height:6.2px;background:rgba(45,110,222,0.35)"></div>
<div class="tc" style="left:533px;top:634px">CG0S129E0001100</div>
<div class="tc" style="left:749px;top:634px">16.0</div>
<div class="tc" style="left:819px;top:634px">V1.0.0.135.00</div>
<div class="tc" style="left:979px;top:634px">2023-12-29</div>
<div class="tc" style="left:1114px;top:634px">2024-01-20</div>
<div class="tc" style="left:1687px;top:634px">V1</div>
<div class="tc" style="left:1756px;top:634px">16</div>
<div class="tc rd" style="left:1812px;top:634px">0.000%</div>
<div class="tc rd" style="left:1944px;top:634px">生产中</div>
<div class="sb" style="left:2048px;top:621.5px;background:#42b4da">进度</div>
<div class="sb" style="left:2131px;top:621.5px;background:#2a2e33;color:#f2f2f2">打印</div>
<div class="m" style="left:370.0px;top:632.6px;width:6.2px;height:6.2px;background:rgba(85,85,85,0.75)"></div><div class="m" style="left:385.0px;top:645.0px;width:6.2px;height:6.2px;background:rgba(85,85,85,0.9)"></div><div class="m" style="left:391.2px;top:632.6px;width:6.2px;height:6.2px;background:rgba(85,85,85,0.35)"></div><div class="m" style="left:391.2px;top:645.0px;width:6.2px;height:6.2px;background:rgba(85,85,85,0.75)"></div><div class="m" style="left:397.4px;top:632.6px;width:6.2px;height:6.2px;background:rgba(85,85,85,0.55)"></div><div class="m" style="left:397.4px;top:638.8px;width:6.2px;height:6.2px;background:rgba(85,85,85,0.75)"></div><div class="m" style="left:397.4px;top:645.0px;width:6.2px;height:6.2px;background:rgba(85,85,85,0.9)"></div><div class="m" style="left:403.6px;top:638.8px;width:6.2px;height:6.2px;background:rgba(85,85,85,0.75)"></div><div class="m" style="left:409.8px;top:632.6px;width:6.2px;height:6.2px;background:rgba(85,85,85,0.9)"></div><div class="m" style="left:409.8px;top:638.8px;width:6.2px;height:6.2px;background:rgba(85,85,85,0.35)"></div><div class="m" style="left:409.8px;top:645.0px;width:6.2px;height:6.2px;background:rgba(85,85,85,0.9)"></div><div class="m" style="left:409.8px;top:651.2px;width:6.2px;height:6.2px;background:rgba(85,85,85,0.35)"></div><div class="m" style="left:416.0px;top:632.6px;width:6.2px;height:6.2px;background:rgba(85,85,85,0.9)"></div><div class="m" style="left:416.0px;top:638.8px;width:6.2px;height:6.2px;background:rgba(85,85,85,0.35)"></div><div class="m" style="left:416.0px;top:645.0px;width:6.2px;height:6.2px;background:rgba(85,85,85,0.55)"></div><div class="m" style="left:416.0px;top:651.2px;width:6.2px;height:6.2px;background:rgba(85,85,85,0.9)"></div><div class="m" style="left:422.2px;top:632.6px;width:6.2px;height:6.2px;background:rgba(85,85,85,0.9)"></div><div class="m" style="left:422.2px;top:638.8px;width:6.2px;height:6.2px;background:rgba(85,85,85,0.9)"></div><div class="m" style="left:422.2px;top:645.0px;width:6.2px;height:6.2px;background:rgba(85,85,85,0.75)"></div><div class="m" style="left:422.2px;top:651.2px;width:6.2px;height:6.2px;background:rgba(85,85,85,0.9)"></div>
<div class="m" style="left:1247.0px;top:638.8px;width:6.2px;height:6.2px;background:rgba(45,110,222,0.9)"></div><div class="m" style="left:1253.2px;top:632.6px;width:6.2px;height:6.2px;background:rgba(45,110,222,0.35)"></div><div class="m" style="left:1253.2px;top:638.8px;width:6.2px;height:6.2px;background:rgba(45,110,222,0.55)"></div><div class="m" style="left:1253.2px;top:645.0px;width:6.2px;height:6.2px;background:rgba(45,110,222,0.75)"></div><div class="m" style="left:1259.4px;top:645.0px;width:6.2px;height:6.2px;background:rgba(45,110,222,0.35)"></div><div class="m" style="left:1278.2px;top:632.6px;width:6.2px;height:6.2px;background:rgba(45,110,222,0.9)"></div><div class="m" style="left:1284.4px;top:645.0px;width:6.2px;height:6.2px;background:rgba(45,110,222,0.55)"></div><div class="m" style="left:1297.0px;top:645.0px;width:6.2px;height:6.2px;background:rgba(45,110,222,0.75)"></div><div class="m" style="left:1303.2px;top:632.6px;width:6.2px;height:6.2px;background:rgba(45,110,222,0.75)"></div><div class="m" style="left:1303.2px;top:645.0px;width:6.2px;height:6.2px;background:rgba(45,110,222,0.55)"></div><div class="m" style="left:1318.0px;top:632.6px;width:6.2px;height:6.2px;background:rgba(45,110,222,0.55)"></div><div class="m" style="left:1318.0px;top:638.8px;width:6.2px;height:6.2px;background:rgba(45,110,222,0.35)"></div><div class="m" style="left:1318.0px;top:645.0px;width:6.2px;height:6.2px;background:rgba(45,110,222,0.35)"></div><div class="m" style="left:1318.0px;top:651.2px;width:6.2px;height:6.2px;background:rgba(45,110,222,0.9)"></div><div class="m" style="left:1324.2px;top:632.6px;width:6.2px;height:6.2px;background:rgba(45,110,222,0.55)"></div><div class="m" style="left:1324.2px;top:638.8px;width:6.2px;height:6.2px;background:rgba(45,110,222,0.35)"></div><div class="m" style="left:1324.2px;top:645.0px;width:6.2px;height:6.2px;background:rgba(45,110,222,0.75)"></div><div class="m" style="left:1330.4px;top:638.8px;width:6.2px;height:6.2px;background:rgba(45,110,222,0.75)"></div><div class="m" style="left:1330.4px;top:645.0px;width:6.2px;height:6.2px;background:rgba(45,110,222,0.55)"></div><div class="m" style="left:1336.6px;top:632.6px;width:6.2px;height:6.2px;background:rgba(45,110,222,0.35)"></div><div class="m" style="left:1336.6px;top:638.8px;width:6.2px;height:6.2px;background:rgba(45,110,222,0.9)"></div><div class="m" style="left:1336.6px;top:645.0px;width:6.2px;height:6.2px;background:rgba(45,110,222,0.55)"></div><div class="m" style="left:1336.6px;top:651.2px;width:6.2px;height:6.2px;background:rgba(45,110,222,0.55)"></div><div class="m" style="left:1342.8px;top:651.2px;width:6.2px;height:6.2px;background:rgba(45,110,222,0.35)"></div><div class="m" style="left:1349.0px;top:632.6px;width:6.2px;height:6.2px;background:rgba(45,110,222,0.9)"></div><div class="m" style="left:1349.0px;top:638.8px;width:6.2px;height:6.2px;background:rgba(45,110,222,0.35)"></div><div class="m" style="left:1349.0px;top:645.0px;width:6.2px;height:6.2px;background:rgba(45,110,222,0.9)"></div><div class="m" style="left:1349.0px;top:651.2px;width:6.2px;height:6.2px;background:rgba(45,110,222,0.75)"></div><div class="m" style="left:1355.2px;top:632.6px;width:6.2px;height:6.2px;background:rgba(45,110,222,0.75)"></div><div class="m" style="left:1355.2px;top:638.8px;width:6.2px;height:6.2px;background:rgba(45,110,222,0.35)"></div><div class="m" style="left:1355.2px;top:651.2px;width:6.2px;height:6.2px;background:rgba(45,110,222,0.9)"></div><div class="m" style="left:1361.4px;top:632.6px;width:6.2px;height:6.2px;background:rgba(45,110,222,0.75)"></div><div class="m" style="left:1361.4px;top:638.8px;width:6.2px;height:6.2px;background:rgba(45,110,222,0.55)"></div><div class="m" style="left:1361.4px;top:645.0px;width:6.2px;height:6.2px;background:rgba(45,110,222,0.35)"></div><div class="m" style="left:1361.4px;top:651.2px;width:6.2px;height:6.2px;background:rgba(45,110,222,0.35)"></div><div class="m" style="left:1367.6px;top:632.6px;width:6.2px;height:6.2px;background:rgba(45,110,222,0.35)"></div><div class="m" style="left:1367.6px;top:645.0px;width:6.2px;height:6.2px;background:rgba(45,110,222,0.9)"></div><div class="m" style="left:1367.6px;top:651.2px;width:6.2px;height:6.2px;background:rgba(45,110,222,0.55)"></div><div class="m" style="left:1373.8px;top:632.6px;width:6.2px;height:6.2px;background:rgba(45,110,222,0.75)"></div><div class="m" style="left:1373.8px;top:645.0px;width:6.2px;height:6.2px;background:rgba(45,110,222,0.35)"></div>
<div class="tc" style="left:533px;top:715px">CG0S16700000100</div>
<div class="tc" style="left:749px;top:715px">45.0</div>
<div class="tc" style="left:819px;top:715px">V1.0.0.010.00</div>
<div class="tc" style="left:979px;top:715px">2023-12-29</div>
<div class="tc" style="left:1114px;top:715px">2024-01-20</div>
<div class="tc" style="left:1687px;top:715px">V1</div>
<div class="tc" style="left:1756px;top:715px">45</div>
<div class="tc rd" style="left:1812px;top:715px">97.000%</div>
<div class="tc rd" style="left:1944px;top:715px">生产中</div>
<div class="sb" style="left:2048px;top:702.5px;background:#42b4da">进度</div>
<div class="sb" style="left:2131px;top:702.5px;background:#2a2e33;color:#f2f2f2">打印</div>
<div class="m" style="left:370.0px;top:726.0px;width:6.2px;height:6.2px;background:rgba(85,85,85,0.75)"></div><div class="m" style="left:376.2px;top:732.2px;width:6.2px;height:6.2px;background:rgba(85,85,85,0.55)"></div><div class="m" style="left:387.0px;top:713.6px;width:6.2px;height:6.2px;background:rgba(85,85,85,0.75)"></div><div class="m" style="left:387.0px;top:719.8px;width:6.2px;height:6.2px;background:rgba(85,85,85,0.35)"></div><div class="m" style="left:387.0px;top:726.0px;width:6.2px;height:6.2px;background:rgba(85,85,85,0.75)"></div><div class="m" style="left:393.2px;top:719.8px;width:6.2px;height:6.2px;background:rgba(85,85,85,0.75)"></div><div class="m" style="left:404.0px;top:713.6px;width:6.2px;height:6.2px;background:rgba(85,85,85,0.9)"></div><div class="m" style="left:404.0px;top:732.2px;width:6.2px;height:6.2px;background:rgba(85,85,85,0.9)"></div><div class="m" style="left:418.0px;top:713.6px;width:6.2px;height:6.2px;background:rgba(85,85,85,0.35)"></div><div class="m" style="left:418.0px;top:726.0px;width:6.2px;height:6.2px;background:rgba(85,85,85,0.9)"></div>
<div class="m" style="left:1247.0px;top:726.0px;width:6.2px;height:6.2px;background:rgba(45,110,222,0.75)"></div><div class="m" style="left:1247.0px;top:732.2px;width:6.2px;height:6.2px;background:rgba(45,110,222,0.75)"></div><div class="m" style="left:1253.2px;top:719.8px;width:6.2px;height:6.2px;background:rgba(45,110,222,0.35)"></div><div class="m" style="left:1259.4px;top:713.6px;width:6.2px;height:6.2px;background:rgba(45,110,222,0.35)"></div><div class="m" style="left:1259.4px;top:719.8px;width:6.2px;height:6.2px;background:rgba(45,110,222,0.55)"></div><div class="m" style="left:1259.4px;top:726.0px;width:6.2px;height:6.2px;background:rgba(45,110,222,0.55)"></div><div class="m" style="left:1265.6px;top:713.6px;width:6.2px;height:6.2px;background:rgba(45,110,222,0.35)"></div><div class="m" style="left:1265.6px;top:719.8px;width:6.2px;height:6.2px;background:rgba(45,110,222,0.9)"></div><div class="m" style="left:1265.6px;top:726.0px;width:6.2px;height:6.2px;background:rgba(45,110,222,0.9)"></div><div class="m" style="left:1271.8px;top:713.6px;width:6.2px;height:6.2px;background:rgba(45,110,222,0.75)"></div><div class="m" style="left:1271.8px;top:719.8px;width:6.2px;height:6.2px;background:rgba(45,110,222,0.75)"></div><div class="m" style="left:1271.8px;top:732.2px;width:6.2px;height:6.2px;background:rgba(45,110,222,0.75)"></div><div class="m" style="left:1278.0px;top:713.6px;width:6.2px;height:6.2px;background:rgba(45,110,222,0.55)"></div><div class="m" style="left:1278.0px;top:732.2px;width:6.2px;height:6.2px;background:rgba(45,110,222,0.9)"></div><div class="m" style="left:1284.2px;top:713.6px;width:6.2px;height:6.2px;background:rgba(45,110,222,0.75)"></div><div class="m" style="left:1284.2px;top:726.0px;width:6.2px;height:6.2px;background:rgba(45,110,222,0.75)"></div><div class="m" style="left:1284.2px;top:732.2px;width:6.2px;height:6.2px;background:rgba(45,110,222,0.55)"></div><div class="m" style="left:1290.4px;top:713.6px;width:6.2px;height:6.2px;background:rgba(45,110,222,0.9)"></div><div class="m" style="left:1290.4px;top:719.8px;width:6.2px;height:6.2px;background:rgba(45,110,222,0.55)"></div><div class="m" style="left:1290.4px;top:726.0px;width:6.2px;height:6.2px;background:rgba(45,110,222,0.35)"></div><div class="m" style="left:1300.0px;top:719.8px;width:6.2px;height:6.2px;background:rgba(45,110,222,0.55)"></div><div class="m" style="left:1300.0px;top:726.0px;width:6.2px;height:6.2px;background:rgba(45,110,222,0.35)"></div><div class="m" style="left:1300.0px;top:732.2px;width:6.2px;height:6.2px;background:rgba(45,110,222,0.9)"></div><div class="m" style="left:1306.2px;top:713.6px;width:6.2px;height:6.2px;background:rgba(45,110,222,0.55)"></div><div class="m" style="left:1306.2px;top:726.0px;width:6.2px;height:6.2px;background:rgba(45,110,222,0.55)"></div><div class="m" style="left:1306.2px;top:732.2px;width:6.2px;height:6.2px;background:rgba(45,110,222,0.9)"></div><div class="m" style="left:1312.4px;top:713.6px;width:6.2px;height:6.2px;background:rgba(45,110,222,0.9)"></div><div class="m" style="left:1312.4px;top:719.8px;width:6.2px;height:6.2px;background:rgba(45,110,222,0.75)"></div><div class="m" style="left:1318.6px;top:713.6px;width:6.2px;height:6.2px;background:rgba(45,110,222,0.55)"></div><div class="m" style="left:1318.6px;top:732.2px;width:6.2px;height:6.2px;background:rgba(45,110,222,0.35)"></div><div class="m" style="left:1324.8px;top:713.6px;width:6.2px;height:6.2px;background:rgba(45,110,222,0.75)"></div><div class="m" style="left:1324.8px;top:732.2px;width:6.2px;height:6.2px;background:rgba(45,110,222,0.75)"></div><div class="m" style="left:1331.0px;top:713.6px;width:6.2px;height:6.2px;background:rgba(45,110,222,0.55)"></div><div class="m" style="left:1331.0px;top:732.2px;width:6.2px;height:6.2px;background:rgba(45,110,222,0.55)"></div><div class="m" style="left:1337.2px;top:713.6px;width:6.2px;height:6.2px;background:rgba(45,110,222,0.55)"></div><div class="m" style="left:1337.2px;top:726.0px;width:6.2px;height:6.2px;background:rgba(45,110,222,0.35)"></div><div class="m" style="left:1337.2px;top:732.2px;width:6.2px;height:6.2px;background:rgba(45,110,222,0.75)"></div><div class="m" style="left:1343.4px;top:713.6px;width:6.2px;height:6.2px;background:rgba(45,110,222,0.35)"></div><div class="m" style="left:1343.4px;top:719.8px;width:6.2px;height:6.2px;background:rgba(45,110,222,0.75)"></div><div class="m" style="left:1343.4px;top:726.0px;width:6.2px;height:6.2px;background:rgba(45,110,222,0.35)"></div><div class="m" style="left:1349.6px;top:713.6px;width:6.2px;height:6.2px;background:rgba(45,110,222,0.55)"></div><div class="m" style="left:1349.6px;top:726.0px;width:6.2px;height:6.2px;background:rgba(45,110,222,0.9)"></div><div class="m" style="left:1349.6px;top:732.2px;width:6.2px;height:6.2px;background:rgba(45,110,222,0.75)"></div><div class="m" style="left:1355.8px;top:713.6px;width:6.2px;height:6.2px;background:rgba(45,110,222,0.55)"></div><div class="m" style="left:1355.8px;top:726.0px;width:6.2px;height:6.2px;background:rgba(45,110,222,0.35)"></div><div class="m" style="left:1355.8px;top:732.2px;width:6.2px;height:6.2px;background:rgba(45,110,222,0.55)"></div><div class="m" style="left:1362.0px;top:713.6px;width:6.2px;height:6.2px;background:rgba(45,110,222,0.75)"></div><div class="m" style="left:1362.0px;top:719.8px;width:6.2px;height:6.2px;background:rgba(45,110,222,0.55)"></div><div class="m" style="left:1362.0px;top:726.0px;width:6.2px;height:6.2px;background:rgba(45,110,222,0.75)"></div><div class="m" style="left:1362.0px;top:732.2px;width:6.2px;height:6.2px;background:rgba(45,110,222,0.55)"></div><div class="m" style="left:1368.2px;top:713.6px;width:6.2px;height:6.2px;background:rgba(45,110,222,0.75)"></div><div class="m" style="left:1368.2px;top:719.8px;width:6.2px;height:6.2px;background:rgba(45,110,222,0.9)"></div><div class="m" style="left:1368.2px;top:732.2px;width:6.2px;height:6.2px;background:rgba(45,110,222,0.35)"></div><div class="m" style="left:1374.4px;top:713.6px;width:6.2px;height:6.2px;background:rgba(45,110,222,0.9)"></div><div class="m" style="left:1374.4px;top:726.0px;width:6.2px;height:6.2px;background:rgba(45,110,222,0.35)"></div><div class="m" style="left:1374.4px;top:732.2px;width:6.2px;height:6.2px;background:rgba(45,110,222,0.55)"></div><div class="m" style="left:1380.6px;top:719.8px;width:6.2px;height:6.2px;background:rgba(45,110,222,0.75)"></div><div class="m" style="left:1380.6px;top:726.0px;width:6.2px;height:6.2px;background:rgba(45,110,222,0.75)"></div><div class="m" style="left:1380.6px;top:732.2px;width:6.2px;height:6.2px;background:rgba(45,110,222,0.55)"></div><div class="m" style="left:1386.8px;top:713.6px;width:6.2px;height:6.2px;background:rgba(45,110,222,0.75)"></div><div class="m" style="left:1386.8px;top:719.8px;width:6.2px;height:6.2px;background:rgba(45,110,222,0.35)"></div><div class="m" style="left:1386.8px;top:726.0px;width:6.2px;height:6.2px;background:rgba(45,110,222,0.9)"></div><div class="m" style="left:1386.8px;top:732.2px;width:6.2px;height:6.2px;background:rgba(45,110,222,0.75)"></div><div class="m" style="left:1410.0px;top:713.6px;width:6.2px;height:6.2px;background:rgba(45,110,222,0.75)"></div><div class="m" style="left:1410.0px;top:719.8px;width:6.2px;height:6.2px;background:rgba(45,110,222,0.55)"></div><div class="m" style="left:1410.0px;top:726.0px;width:6.2px;height:6.2px;background:rgba(45,110,222,0.55)"></div><div class="m" style="left:1410.0px;top:732.2px;width:6.2px;height:6.2px;background:rgba(45,110,222,0.75)"></div><div class="m" style="left:1416.2px;top:713.6px;width:6.2px;height:6.2px;background:rgba(45,110,222,0.9)"></div><div class="m" style="left:1416.2px;top:719.8px;width:6.2px;height:6.2px;background:rgba(45,110,222,0.55)"></div><div class="m" style="left:1416.2px;top:732.2px;width:6.2px;height:6.2px;background:rgba(45,110,222,0.9)"></div><div class="m" style="left:1422.4px;top:713.6px;width:6.2px;height:6.2px;background:rgba(45,110,222,0.55)"></div><div class="m" style="left:1422.4px;top:719.8px;width:6.2px;height:6.2px;background:rgba(45,110,222,0.9)"></div><div class="m" style="left:1422.4px;top:732.2px;width:6.2px;height:6.2px;background:rgba(45,110,222,0.35)"></div><div class="m" style="left:1428.6px;top:713.6px;width:6.2px;height:6.2px;background:rgba(45,110,222,0.35)"></div><div class="m" style="left:1428.6px;top:719.8px;width:6.2px;height:6.2px;background:rgba(45,110,222,0.75)"></div><div class="m" style="left:1434.8px;top:719.8px;width:6.2px;height:6.2px;background:rgba(45,110,222,0.75)"></div><div class="m" style="left:1434.8px;top:732.2px;width:6.2px;height:6.2px;background:rgba(45,110,222,0.35)"></div><div class="m" style="left:1441.0px;top:713.6px;width:6.2px;height:6.2px;background:rgba(45,110,222,0.35)"></div><div class="m" style="left:1441.0px;top:726.0px;width:6.2px;height:6.2px;background:rgba(45,110,222,0.55)"></div><div class="m" style="left:1441.0px;top:732.2px;width:6.2px;height:6.2px;background:rgba(45,110,222,0.9)"></div><div class="m" style="left:1447.2px;top:713.6px;width:6.2px;height:6.2px;background:rgba(45,110,222,0.55)"></div><div class="m" style="left:1447.2px;top:719.8px;width:6.2px;height:6.2px;background:rgba(45,110,222,0.75)"></div><div class="m" style="left:1447.2px;top:732.2px;width:6.2px;height:6.2px;background:rgba(45,110,222,0.75)"></div><div class="m" style="left:1453.4px;top:719.8px;width:6.2px;height:6.2px;background:rgba(45,110,222,0.55)"></div><div class="m" style="left:1453.4px;top:726.0px;width:6.2px;height:6.2px;background:rgba(45,110,222,0.35)"></div>
<div class="tc" style="left:533px;top:796px">CW05027E3700210</div>
<div class="tc" style="left:749px;top:796px">10.0</div>
<div class="tc" style="left:819px;top:796px">V2.1.0</div>
<div class="tc" style="left:979px;top:796px">2023-12-28</div>
<div class="tc" style="left:1114px;top:796px">2024-01-16</div>
<div class="tc" style="left:1687px;top:796px">V1</div>
<div class="tc" style="left:1756px;top:796px">0</div>
<div class="tc rd" style="left:1812px;top:796px">100.000%</div>
<div class="tc rd" style="left:1944px;top:796px">已完成</div>
<div class="sb" style="left:2048px;top:783.5px;background:#42b4da">进度</div>
<div class="m" style="left:370.0px;top:803.9px;width:6.2px;height:6.2px;background:rgba(85,85,85,0.75)"></div><div class="m" style="left:398.4px;top:803.9px;width:6.2px;height:6.2px;background:rgba(85,85,85,0.55)"></div><div class="m" style="left:412.0px;top:797.7px;width:6.2px;height:6.2px;background:rgba(85,85,85,0.55)"></div><div class="m" style="left:412.0px;top:803.9px;width:6.2px;height:6.2px;background:rgba(85,85,85,0.9)"></div><div class="m" style="left:412.0px;top:810.1px;width:6.2px;height:6.2px;background:rgba(85,85,85,0.75)"></div><div class="m" style="left:418.2px;top:797.7px;width:6.2px;height:6.2px;background:rgba(85,85,85,0.35)"></div><div class="m" style="left:424.4px;top:797.7px;width:6.2px;height:6.2px;background:rgba(85,85,85,0.55)"></div><div class="m" style="left:424.4px;top:810.1px;width:6.2px;height:6.2px;background:rgba(85,85,85,0.35)"></div><div class="m" style="left:436.0px;top:803.9px;width:6.2px;height:6.2px;background:rgba(85,85,85,0.9)"></div><div class="m" style="left:442.2px;top:797.7px;width:6.2px;height:6.2px;background:rgba(85,85,85,0.35)"></div><div class="m" style="left:442.2px;top:803.9px;width:6.2px;height:6.2px;background:rgba(85,85,85,0.75)"></div><div class="m" style="left:442.2px;top:810.1px;width:6.2px;height:6.2px;background:rgba(85,85,85,0.55)"></div><div class="m" style="left:458.0px;top:803.9px;width:6.2px;height:6.2px;background:rgba(85,85,85,0.55)"></div><div class="m" style="left:458.0px;top:810.1px;width:6.2px;height:6.2px;background:rgba(85,85,85,0.75)"></div><div class="m" style="left:464.2px;top:797.7px;width:6.2px;height:6.2px;background:rgba(85,85,85,0.75)"></div><div class="m" style="left:470.4px;top:810.1px;width:6.2px;height:6.2px;background:rgba(85,85,85,0.9)"></div><div class="m" style="left:476.6px;top:803.9px;width:6.2px;height:6.2px;background:rgba(85,85,85,0.35)"></div><div class="m" style="left:476.6px;top:810.1px;width:6.2px;height:6.2px;background:rgba(85,85,85,0.55)"></div>
<div class="m" style="left:1247.0px;top:797.7px;width:6.2px;height:6.2px;background:rgba(45,110,222,0.55)"></div><div class="m" style="left:1253.2px;top:797.7px;width:6.2px;height:6.2px;background:rgba(45,110,222,0.75)"></div><div class="m" style="left:1253.2px;top:810.1px;width:6.2px;height:6.2px;background:rgba(45,110,222,0.55)"></div><div class="m" style="left:1265.6px;top:797.7px;width:6.2px;height:6.2px;background:rgba(45,110,222,0.55)"></div><div class="m" style="left:1271.8px;top:797.7px;width:6.2px;height:6.2px;background:rgba(45,110,222,0.55)"></div><div class="m" style="left:1271.8px;top:810.1px;width:6.2px;height:6.2px;background:rgba(45,110,222,0.55)"></div><div class="m" style="left:1278.0px;top:810.1px;width:6.2px;height:6.2px;background:rgba(45,110,222,0.35)"></div><div class="m" style="left:1284.2px;top:797.7px;width:6.2px;height:6.2px;background:rgba(45,110,222,0.55)"></div><div class="m" style="left:1284.2px;top:803.9px;width:6.2px;height:6.2px;background:rgba(45,110,222,0.55)"></div><div class="m" style="left:1290.4px;top:797.7px;width:6.2px;height:6.2px;background:rgba(45,110,222,0.75)"></div><div class="m" style="left:1290.4px;top:810.1px;width:6.2px;height:6.2px;background:rgba(45,110,222,0.9)"></div><div class="m" style="left:1296.6px;top:803.9px;width:6.2px;height:6.2px;background:rgba(45,110,222,0.75)"></div><div class="m" style="left:1296.6px;top:810.1px;width:6.2px;height:6.2px;background:rgba(45,110,222,0.55)"></div><div class="m" style="left:1302.8px;top:797.7px;width:6.2px;height:6.2px;background:rgba(45,110,222,0.35)"></div><div class="m" style="left:1302.8px;top:810.1px;width:6.2px;height:6.2px;background:rgba(45,110,222,0.35)"></div><div class="m" style="left:1309.0px;top:797.7px;width:6.2px;height:6.2px;background:rgba(45,110,222,0.9)"></div><div class="m" style="left:1309.0px;top:803.9px;width:6.2px;height:6.2px;background:rgba(45,110,222,0.75)"></div><div class="m" style="left:1309.0px;top:810.1px;width:6.2px;height:6.2px;background:rgba(45,110,222,0.9)"></div><div class="m" style="left:1315.2px;top:797.7px;width:6.2px;height:6.2px;background:rgba(45,110,222,0.75)"></div><div class="m" style="left:1321.4px;top:797.7px;width:6.2px;height:6.2px;background:rgba(45,110,222,0.35)"></div><div class="m" style="left:1321.4px;top:810.1px;width:6.2px;height:6.2px;background:rgba(45,110,222,0.9)"></div><div class="m" style="left:1333.8px;top:797.7px;width:6.2px;height:6.2px;background:rgba(45,110,222,0.9)"></div><div class="m" style="left:1333.8px;top:803.9px;width:6.2px;height:6.2px;background:rgba(45,110,222,0.9)"></div><div class="m" style="left:1340.0px;top:797.7px;width:6.2px;height:6.2px;background:rgba(45,110,222,0.75)"></div><div class="m" style="left:1340.0px;top:803.9px;width:6.2px;height:6.2px;background:rgba(45,110,222,0.9)"></div><div class="m" style="left:1352.4px;top:803.9px;width:6.2px;height:6.2px;background:rgba(45,110,222,0.9)"></div><div class="m" style="left:1364.8px;top:797.7px;width:6.2px;height:6.2px;background:rgba(45,110,222,0.35)"></div><div class="m" style="left:1364.8px;top:803.9px;width:6.2px;height:6.2px;background:rgba(45,110,222,0.55)"></div><div class="m" style="left:1364.8px;top:810.1px;width:6.2px;height:6.2px;background:rgba(45,110,222,0.35)"></div><div class="m" style="left:1371.0px;top:797.7px;width:6.2px;height:6.2px;background:rgba(45,110,222,0.75)"></div><div class="m" style="left:1371.0px;top:803.9px;width:6.2px;height:6.2px;background:rgba(45,110,222,0.75)"></div><div class="m" style="left:1371.0px;top:810.1px;width:6.2px;height:6.2px;background:rgba(45,110,222,0.9)"></div><div class="m" style="left:1377.2px;top:797.7px;width:6.2px;height:6.2px;background:rgba(45,110,222,0.55)"></div><div class="m" style="left:1377.2px;top:810.1px;width:6.2px;height:6.2px;background:rgba(45,110,222,0.55)"></div><div class="m" style="left:1383.4px;top:797.7px;width:6.2px;height:6.2px;background:rgba(45,110,222,0.9)"></div><div class="m" style="left:1383.4px;top:803.9px;width:6.2px;height:6.2px;background:rgba(45,110,222,0.9)"></div><div class="m" style="left:1389.6px;top:797.7px;width:6.2px;height:6.2px;background:rgba(45,110,222,0.55)"></div><div class="m" style="left:1389.6px;top:803.9px;width:6.2px;height:6.2px;background:rgba(45,110,222,0.35)"></div><div class="m" style="left:1389.6px;top:810.1px;width:6.2px;height:6.2px;background:rgba(45,110,222,0.35)"></div><div class="m" style="left:1395.8px;top:797.7px;width:6.2px;height:6.2px;background:rgba(45,110,222,0.9)"></div><div class="m" style="left:1395.8px;top:810.1px;width:6.2px;height:6.2px;background:rgba(45,110,222,0.55)"></div><div class="m" style="left:1402.0px;top:810.1px;width:6.2px;height:6.2px;background:rgba(45,110,222,0.75)"></div><div class="m" style="left:1414.4px;top:803.9px;width:6.2px;height:6.2px;background:rgba(45,110,222,0.55)"></div><div class="m" style="left:1420.6px;top:803.9px;width:6.2px;height:6.2px;background:rgba(45,110,222,0.75)"></div><div class="m" style="left:1420.6px;top:810.1px;width:6.2px;height:6.2px;background:rgba(45,110,222,0.75)"></div><div class="m" style="left:1426.8px;top:803.9px;width:6.2px;height:6.2px;background:rgba(45,110,222,0.9)"></div><div class="m" style="left:1426.8px;top:810.1px;width:6.2px;height:6.2px;background:rgba(45,110,222,0.75)"></div><div class="m" style="left:1439.2px;top:797.7px;width:6.2px;height:6.2px;background:rgba(45,110,222,0.75)"></div><div class="m" style="left:1439.2px;top:803.9px;width:6.2px;height:6.2px;background:rgba(45,110,222,0.75)"></div><div class="m" style="left:1445.4px;top:797.7px;width:6.2px;height:6.2px;background:rgba(45,110,222,0.55)"></div><div class="m" style="left:1445.4px;top:810.1px;width:6.2px;height:6.2px;background:rgba(45,110,222,0.55)"></div><div class="m" style="left:1451.6px;top:797.7px;width:6.2px;height:6.2px;background:rgba(45,110,222,0.35)"></div><div class="m" style="left:1451.6px;top:810.1px;width:6.2px;height:6.2px;background:rgba(45,110,222,0.35)"></div><div class="m" style="left:1457.8px;top:797.7px;width:6.2px;height:6.2px;background:rgba(45,110,222,0.9)"></div><div class="m" style="left:1457.8px;top:803.9px;width:6.2px;height:6.2px;background:rgba(45,110,222,0.75)"></div><div class="m" style="left:1457.8px;top:810.1px;width:6.2px;height:6.2px;background:rgba(45,110,222,0.75)"></div><div class="m" style="left:1464.0px;top:797.7px;width:6.2px;height:6.2px;background:rgba(45,110,222,0.35)"></div><div class="m" style="left:1464.0px;top:803.9px;width:6.2px;height:6.2px;background:rgba(45,110,222,0.55)"></div><div class="m" style="left:1464.0px;top:810.1px;width:6.2px;height:6.2px;background:rgba(45,110,222,0.35)"></div><div class="m" style="left:1470.2px;top:797.7px;width:6.2px;height:6.2px;background:rgba(45,110,222,0.75)"></div><div class="m" style="left:1470.2px;top:803.9px;width:6.2px;height:6.2px;background:rgba(45,110,222,0.75)"></div><div class="m" style="left:1476.4px;top:797.7px;width:6.2px;height:6.2px;background:rgba(45,110,222,0.35)"></div><div class="m" style="left:1476.4px;top:803.9px;width:6.2px;height:6.2px;background:rgba(45,110,222,0.75)"></div><div class="m" style="left:1476.4px;top:810.1px;width:6.2px;height:6.2px;background:rgba(45,110,222,0.75)"></div><div class="m" style="left:1482.6px;top:803.9px;width:6.2px;height:6.2px;background:rgba(45,110,222,0.35)"></div><div class="m" style="left:1482.6px;top:810.1px;width:6.2px;height:6.2px;background:rgba(45,110,222,0.9)"></div><div class="m" style="left:1488.8px;top:797.7px;width:6.2px;height:6.2px;background:rgba(45,110,222,0.55)"></div><div class="m" style="left:1488.8px;top:803.9px;width:6.2px;height:6.2px;background:rgba(45,110,222,0.9)"></div><div class="m" style="left:1495.0px;top:810.1px;width:6.2px;height:6.2px;background:rgba(45,110,222,0.9)"></div><div class="m" style="left:1501.2px;top:797.7px;width:6.2px;height:6.2px;background:rgba(45,110,222,0.55)"></div><div class="m" style="left:1501.2px;top:803.9px;width:6.2px;height:6.2px;background:rgba(45,110,222,0.35)"></div><div class="m" style="left:1501.2px;top:810.1px;width:6.2px;height:6.2px;background:rgba(45,110,222,0.55)"></div><div class="m" style="left:1507.4px;top:797.7px;width:6.2px;height:6.2px;background:rgba(45,110,222,0.55)"></div><div class="m" style="left:1507.4px;top:803.9px;width:6.2px;height:6.2px;background:rgba(45,110,222,0.75)"></div><div class="m" style="left:1507.4px;top:810.1px;width:6.2px;height:6.2px;background:rgba(45,110,222,0.35)"></div><div class="m" style="left:1513.6px;top:810.1px;width:6.2px;height:6.2px;background:rgba(45,110,222,0.9)"></div><div class="m" style="left:1519.8px;top:803.9px;width:6.2px;height:6.2px;background:rgba(45,110,222,0.9)"></div><div class="m" style="left:1526.0px;top:803.9px;width:6.2px;height:6.2px;background:rgba(45,110,222,0.9)"></div><div class="m" style="left:1532.2px;top:797.7px;width:6.2px;height:6.2px;background:rgba(45,110,222,0.9)"></div><div class="m" style="left:1538.4px;top:797.7px;width:6.2px;height:6.2px;background:rgba(45,110,222,0.9)"></div><div class="m" style="left:1538.4px;top:803.9px;width:6.2px;height:6.2px;background:rgba(45,110,222,0.35)"></div><div class="m" style="left:1544.6px;top:797.7px;width:6.2px;height:6.2px;background:rgba(45,110,222,0.9)"></div><div class="m" style="left:1544.6px;top:803.9px;width:6.2px;height:6.2px;background:rgba(45,110,222,0.35)"></div><div class="m" style="left:1544.6px;top:810.1px;width:6.2px;height:6.2px;background:rgba(45,110,222,0.35)"></div><div class="m" style="left:1550.8px;top:797.7px;width:6.2px;height:6.2px;background:rgba(45,110,222,0.9)"></div><div class="m" style="left:1557.0px;top:803.9px;width:6.2px;height:6.2px;background:rgba(45,110,222,0.35)"></div><div class="m" style="left:1557.0px;top:810.1px;width:6.2px;height:6.2px;background:rgba(45,110,222,0.9)"></div><div class="m" style="left:1563.2px;top:797.7px;width:6.2px;height:6.2px;background:rgba(45,110,222,0.9)"></div><div class="m" style="left:1563.2px;top:810.1px;width:6.2px;height:6.2px;background:rgba(45,110,222,0.35)"></div><div class="m" style="left:1569.4px;top:797.7px;width:6.2px;height:6.2px;background:rgba(45,110,222,0.55)"></div><div class="m" style="left:1569.4px;top:803.9px;width:6.2px;height:6.2px;background:rgba(45,110,222,0.9)"></div><div class="m" style="left:1581.8px;top:803.9px;width:6.2px;height:6.2px;background:rgba(45,110,222,0.9)"></div><div class="m" style="left:1581.8px;top:810.1px;width:6.2px;height:6.2px;background:rgba(45,110,222,0.55)"></div><div class="m" style="left:1588.0px;top:797.7px;width:6.2px;height:6.2px;background:rgba(45,110,222,0.9)"></div><div class="m" style="left:1588.0px;top:803.9px;width:6.2px;height:6.2px;background:rgba(45,110,222,0.35)"></div><div class="m" style="left:1588.0px;top:810.1px;width:6.2px;height:6.2px;background:rgba(45,110,222,0.55)"></div><div class="m" style="left:1594.2px;top:797.7px;width:6.2px;height:6.2px;background:rgba(45,110,222,0.9)"></div><div class="m" style="left:1594.2px;top:803.9px;width:6.2px;height:6.2px;background:rgba(45,110,222,0.55)"></div><div class="m" style="left:1600.4px;top:797.7px;width:6.2px;height:6.2px;background:rgba(45,110,222,0.55)"></div><div class="m" style="left:1600.4px;top:803.9px;width:6.2px;height:6.2px;background:rgba(45,110,222,0.9)"></div><div class="m" style="left:1606.6px;top:797.7px;width:6.2px;height:6.2px;background:rgba(45,110,222,0.75)"></div><div class="m" style="left:1606.6px;top:810.1px;width:6.2px;height:6.2px;background:rgba(45,110,222,0.75)"></div><div class="m" style="left:1612.8px;top:797.7px;width:6.2px;height:6.2px;background:rgba(45,110,222,0.75)"></div><div class="m" style="left:1612.8px;top:803.9px;width:6.2px;height:6.2px;background:rgba(45,110,222,0.9)"></div><div class="m" style="left:1612.8px;top:810.1px;width:6.2px;height:6.2px;background:rgba(45,110,222,0.9)"></div><div class="m" style="left:1619.0px;top:803.9px;width:6.2px;height:6.2px;background:rgba(45,110,222,0.35)"></div><div class="m" style="left:1619.0px;top:810.1px;width:6.2px;height:6.2px;background:rgba(45,110,222,0.75)"></div><div class="m" style="left:1625.2px;top:803.9px;width:6.2px;height:6.2px;background:rgba(45,110,222,0.55)"></div><div class="m" style="left:1625.2px;top:810.1px;width:6.2px;height:6.2px;background:rgba(45,110,222,0.55)"></div><div class="m" style="left:1631.4px;top:797.7px;width:6.2px;height:6.2px;background:rgba(45,110,222,0.35)"></div><div class="m" style="left:1631.4px;top:810.1px;width:6.2px;height:6.2px;background:rgba(45,110,222,0.75)"></div><div class="m" style="left:1637.6px;top:803.9px;width:6.2px;height:6.2px;background:rgba(45,110,222,0.9)"></div><div class="m" style="left:1643.8px;top:797.7px;width:6.2px;height:6.2px;background:rgba(45,110,222,0.9)"></div><div class="m" style="left:1643.8px;top:803.9px;width:6.2px;height:6.2px;background:rgba(45,110,222,0.55)"></div><div class="m" style="left:1643.8px;top:810.1px;width:6.2px;height:6.2px;background:rgba(45,110,222,0.75)"></div><div class="m" style="left:1650.0px;top:797.7px;width:6.2px;height:6.2px;background:rgba(45,110,222,0.55)"></div><div class="m" style="left:1650.0px;top:803.9px;width:6.2px;height:6.2px;background:rgba(45,110,222,0.55)"></div><div class="m" style="left:1650.0px;top:810.1px;width:6.2px;height:6.2px;background:rgba(45,110,222,0.75)"></div>
<div class="tc" style="left:533px;top:877px">CW05027E3700210</div>
<div class="tc" style="left:749px;top:877px">32.0</div>
<div class="tc" style="left:819px;top:877px">V2.1.0</div>
<div class="tc" style="left:979px;top:877px">2023-12-27</div>
<div class="tc" style="left:1114px;top:877px">2024-01-16</div>
<div class="tc" style="left:1687px;top:877px">V1</div>
<div class="tc" style="left:1756px;top:877px">0</div>
<div class="tc rd" style="left:1812px;top:877px">100.000%</div>
<div class="tc rd" style="left:1944px;top:877px">已完成</div>
<div class="sb" style="left:2048px;top:864.25px;background:#42b4da">进度</div>
<div class="m" style="left:370.0px;top:884.7px;width:6.2px;height:6.2px;background:rgba(85,85,85,0.35)"></div><div class="m" style="left:376.2px;top:878.5px;width:6.2px;height:6.2px;background:rgba(85,85,85,0.75)"></div><div class="m" style="left:376.2px;top:890.9px;width:6.2px;height:6.2px;background:rgba(85,85,85,0.55)"></div><div class="m" style="left:386.0px;top:878.5px;width:6.2px;height:6.2px;background:rgba(85,85,85,0.35)"></div><div class="m" style="left:386.0px;top:884.7px;width:6.2px;height:6.2px;background:rgba(85,85,85,0.35)"></div><div class="m" style="left:386.0px;top:890.9px;width:6.2px;height:6.2px;background:rgba(85,85,85,0.35)"></div><div class="m" style="left:392.2px;top:884.7px;width:6.2px;height:6.2px;background:rgba(85,85,85,0.75)"></div><div class="m" style="left:398.4px;top:878.5px;width:6.2px;height:6.2px;background:rgba(85,85,85,0.35)"></div><div class="m" style="left:398.4px;top:884.7px;width:6.2px;height:6.2px;background:rgba(85,85,85,0.55)"></div><div class="m" style="left:398.4px;top:890.9px;width:6.2px;height:6.2px;background:rgba(85,85,85,0.75)"></div><div class="m" style="left:404.6px;top:884.7px;width:6.2px;height:6.2px;background:rgba(85,85,85,0.55)"></div><div class="m" style="left:410.8px;top:878.5px;width:6.2px;height:6.2px;background:rgba(85,85,85,0.9)"></div><div class="m" style="left:428.0px;top:878.5px;width:6.2px;height:6.2px;background:rgba(85,85,85,0.9)"></div><div class="m" style="left:428.0px;top:884.7px;width:6.2px;height:6.2px;background:rgba(85,85,85,0.35)"></div><div class="m" style="left:458.4px;top:884.7px;width:6.2px;height:6.2px;background:rgba(85,85,85,0.55)"></div><div class="m" style="left:458.4px;top:890.9px;width:6.2px;height:6.2px;background:rgba(85,85,85,0.9)"></div><div class="m" style="left:464.6px;top:878.5px;width:6.2px;height:6.2px;background:rgba(85,85,85,0.9)"></div><div class="m" style="left:464.6px;top:890.9px;width:6.2px;height:6.2px;background:rgba(85,85,85,0.55)"></div><div class="m" style="left:470.8px;top:878.5px;width:6.2px;height:6.2px;background:rgba(85,85,85,0.55)"></div><div class="m" style="left:477.0px;top:878.5px;width:6.2px;height:6.2px;background:rgba(85,85,85,0.55)"></div>
<div class="m" style="left:1247.0px;top:890.9px;width:6.2px;height:6.2px;background:rgba(45,110,222,0.55)"></div><div class="m" style="left:1265.6px;top:878.5px;width:6.2px;height:6.2px;background:rgba(45,110,222,0.35)"></div><div class="m" style="left:1271.8px;top:890.9px;width:6.2px;height:6.2px;background:rgba(45,110,222,0.55)"></div><div class="m" style="left:1278.0px;top:878.5px;width:6.2px;height:6.2px;background:rgba(45,110,222,0.9)"></div><div class="m" style="left:1278.0px;top:884.7px;width:6.2px;height:6.2px;background:rgba(45,110,222,0.75)"></div><div class="m" style="left:1290.4px;top:878.5px;width:6.2px;height:6.2px;background:rgba(45,110,222,0.55)"></div><div class="m" style="left:1290.4px;top:884.7px;width:6.2px;height:6.2px;background:rgba(45,110,222,0.55)"></div><div class="m" style="left:1290.4px;top:890.9px;width:6.2px;height:6.2px;background:rgba(45,110,222,0.9)"></div><div class="m" style="left:1296.6px;top:878.5px;width:6.2px;height:6.2px;background:rgba(45,110,222,0.9)"></div><div class="m" style="left:1296.6px;top:884.7px;width:6.2px;height:6.2px;background:rgba(45,110,222,0.55)"></div><div class="m" style="left:1302.8px;top:884.7px;width:6.2px;height:6.2px;background:rgba(45,110,222,0.55)"></div><div class="m" style="left:1302.8px;top:890.9px;width:6.2px;height:6.2px;background:rgba(45,110,222,0.9)"></div><div class="m" style="left:1309.0px;top:890.9px;width:6.2px;height:6.2px;background:rgba(45,110,222,0.9)"></div><div class="m" style="left:1315.2px;top:884.7px;width:6.2px;height:6.2px;background:rgba(45,110,222,0.9)"></div><div class="m" style="left:1321.4px;top:878.5px;width:6.2px;height:6.2px;background:rgba(45,110,222,0.35)"></div><div class="m" style="left:1333.8px;top:878.5px;width:6.2px;height:6.2px;background:rgba(45,110,222,0.35)"></div><div class="m" style="left:1333.8px;top:890.9px;width:6.2px;height:6.2px;background:rgba(45,110,222,0.9)"></div><div class="m" style="left:1340.0px;top:878.5px;width:6.2px;height:6.2px;background:rgba(45,110,222,0.55)"></div><div class="m" style="left:1340.0px;top:884.7px;width:6.2px;height:6.2px;background:rgba(45,110,222,0.75)"></div><div class="m" style="left:1346.2px;top:884.7px;width:6.2px;height:6.2px;background:rgba(45,110,222,0.55)"></div><div class="m" style="left:1346.2px;top:890.9px;width:6.2px;height:6.2px;background:rgba(45,110,222,0.35)"></div><div class="m" style="left:1358.6px;top:890.9px;width:6.2px;height:6.2px;background:rgba(45,110,222,0.9)"></div><div class="m" style="left:1364.8px;top:884.7px;width:6.2px;height:6.2px;background:rgba(45,110,222,0.9)"></div><div class="m" style="left:1371.0px;top:878.5px;width:6.2px;height:6.2px;background:rgba(45,110,222,0.75)"></div><div class="m" style="left:1371.0px;top:884.7px;width:6.2px;height:6.2px;background:rgba(45,110,222,0.55)"></div><div class="m" style="left:1371.0px;top:890.9px;width:6.2px;height:6.2px;background:rgba(45,110,222,0.9)"></div><div class="m" style="left:1377.2px;top:878.5px;width:6.2px;height:6.2px;background:rgba(45,110,222,0.9)"></div><div class="m" style="left:1377.2px;top:890.9px;width:6.2px;height:6.2px;background:rgba(45,110,222,0.9)"></div><div class="m" style="left:1389.6px;top:878.5px;width:6.2px;height:6.2px;background:rgba(45,110,222,0.9)"></div><div class="m" style="left:1389.6px;top:884.7px;width:6.2px;height:6.2px;background:rgba(45,110,222,0.35)"></div><div class="m" style="left:1395.8px;top:878.5px;width:6.2px;height:6.2px;background:rgba(45,110,222,0.75)"></div><div class="m" style="left:1408.2px;top:884.7px;width:6.2px;height:6.2px;background:rgba(45,110,222,0.35)"></div><div class="m" style="left:1408.2px;top:890.9px;width:6.2px;height:6.2px;background:rgba(45,110,222,0.55)"></div><div class="m" style="left:1414.4px;top:890.9px;width:6.2px;height:6.2px;background:rgba(45,110,222,0.55)"></div><div class="m" style="left:1420.6px;top:890.9px;width:6.2px;height:6.2px;background:rgba(45,110,222,0.75)"></div><div class="m" style="left:1426.8px;top:884.7px;width:6.2px;height:6.2px;background:rgba(45,110,222,0.9)"></div><div class="m" style="left:1426.8px;top:890.9px;width:6.2px;height:6.2px;background:rgba(45,110,222,0.35)"></div><div class="m" style="left:1433.0px;top:878.5px;width:6.2px;height:6.2px;background:rgba(45,110,222,0.55)"></div><div class="m" style="left:1433.0px;top:884.7px;width:6.2px;height:6.2px;background:rgba(45,110,222,0.55)"></div><div class="m" style="left:1433.0px;top:890.9px;width:6.2px;height:6.2px;background:rgba(45,110,222,0.55)"></div><div class="m" style="left:1439.2px;top:878.5px;width:6.2px;height:6.2px;background:rgba(45,110,222,0.75)"></div><div class="m" style="left:1439.2px;top:884.7px;width:6.2px;height:6.2px;background:rgba(45,110,222,0.9)"></div><div class="m" style="left:1445.4px;top:878.5px;width:6.2px;height:6.2px;background:rgba(45,110,222,0.75)"></div><div class="m" style="left:1445.4px;top:884.7px;width:6.2px;height:6.2px;background:rgba(45,110,222,0.9)"></div><div class="m" style="left:1460.0px;top:878.5px;width:6.2px;height:6.2px;background:rgba(45,110,222,0.55)"></div><div class="m" style="left:1460.0px;top:890.9px;width:6.2px;height:6.2px;background:rgba(45,110,222,0.9)"></div><div class="m" style="left:1466.2px;top:878.5px;width:6.2px;height:6.2px;background:rgba(45,110,222,0.9)"></div><div class="m" style="left:1466.2px;top:884.7px;width:6.2px;height:6.2px;background:rgba(45,110,222,0.75)"></div><div class="m" style="left:1466.2px;top:890.9px;width:6.2px;height:6.2px;background:rgba(45,110,222,0.75)"></div><div class="m" style="left:1472.4px;top:878.5px;width:6.2px;height:6.2px;background:rgba(45,110,222,0.55)"></div><div class="m" style="left:1472.4px;top:884.7px;width:6.2px;height:6.2px;background:rgba(45,110,222,0.35)"></div><div class="m" style="left:1478.6px;top:878.5px;width:6.2px;height:6.2px;background:rgba(45,110,222,0.35)"></div><div class="m" style="left:1484.8px;top:878.5px;width:6.2px;height:6.2px;background:rgba(45,110,222,0.35)"></div><div class="m" style="left:1484.8px;top:890.9px;width:6.2px;height:6.2px;background:rgba(45,110,222,0.75)"></div><div class="m" style="left:1497.2px;top:878.5px;width:6.2px;height:6.2px;background:rgba(45,110,222,0.75)"></div><div class="m" style="left:1497.2px;top:884.7px;width:6.2px;height:6.2px;background:rgba(45,110,222,0.9)"></div><div class="m" style="left:1497.2px;top:890.9px;width:6.2px;height:6.2px;background:rgba(45,110,222,0.9)"></div><div class="m" style="left:1503.4px;top:878.5px;width:6.2px;height:6.2px;background:rgba(45,110,222,0.9)"></div><div class="m" style="left:1503.4px;top:890.9px;width:6.2px;height:6.2px;background:rgba(45,110,222,0.75)"></div><div class="m" style="left:1509.6px;top:878.5px;width:6.2px;height:6.2px;background:rgba(45,110,222,0.9)"></div><div class="m" style="left:1509.6px;top:884.7px;width:6.2px;height:6.2px;background:rgba(45,110,222,0.55)"></div><div class="m" style="left:1509.6px;top:890.9px;width:6.2px;height:6.2px;background:rgba(45,110,222,0.55)"></div><div class="m" style="left:1515.8px;top:878.5px;width:6.2px;height:6.2px;background:rgba(45,110,222,0.75)"></div><div class="m" style="left:1522.0px;top:878.5px;width:6.2px;height:6.2px;background:rgba(45,110,222,0.75)"></div><div class="m" style="left:1528.2px;top:884.7px;width:6.2px;height:6.2px;background:rgba(45,110,222,0.9)"></div><div class="m" style="left:1528.2px;top:890.9px;width:6.2px;height:6.2px;background:rgba(45,110,222,0.35)"></div><div class="m" style="left:1534.4px;top:884.7px;width:6.2px;height:6.2px;background:rgba(45,110,222,0.9)"></div><div class="m" style="left:1534.4px;top:890.9px;width:6.2px;height:6.2px;background:rgba(45,110,222,0.75)"></div><div class="m" style="left:1540.6px;top:878.5px;width:6.2px;height:6.2px;background:rgba(45,110,222,0.75)"></div><div class="m" style="left:1540.6px;top:890.9px;width:6.2px;height:6.2px;background:rgba(45,110,222,0.35)"></div><div class="m" style="left:1546.8px;top:878.5px;width:6.2px;height:6.2px;background:rgba(45,110,222,0.75)"></div><div class="m" style="left:1546.8px;top:890.9px;width:6.2px;height:6.2px;background:rgba(45,110,222,0.55)"></div><div class="m" style="left:1553.0px;top:884.7px;width:6.2px;height:6.2px;background:rgba(45,110,222,0.75)"></div><div class="m" style="left:1559.2px;top:878.5px;width:6.2px;height:6.2px;background:rgba(45,110,222,0.55)"></div><div class="m" style="left:1565.4px;top:884.7px;width:6.2px;height:6.2px;background:rgba(45,110,222,0.9)"></div><div class="m" style="left:1565.4px;top:890.9px;width:6.2px;height:6.2px;background:rgba(45,110,222,0.35)"></div><div class="m" style="left:1571.6px;top:890.9px;width:6.2px;height:6.2px;background:rgba(45,110,222,0.9)"></div><div class="m" style="left:1577.8px;top:878.5px;width:6.2px;height:6.2px;background:rgba(45,110,222,0.55)"></div><div class="m" style="left:1577.8px;top:890.9px;width:6.2px;height:6.2px;background:rgba(45,110,222,0.9)"></div><div class="m" style="left:1584.0px;top:878.5px;width:6.2px;height:6.2px;background:rgba(45,110,222,0.35)"></div><div class="m" style="left:1584.0px;top:884.7px;width:6.2px;height:6.2px;background:rgba(45,110,222,0.55)"></div><div class="m" style="left:1584.0px;top:890.9px;width:6.2px;height:6.2px;background:rgba(45,110,222,0.75)"></div><div class="m" style="left:1590.2px;top:884.7px;width:6.2px;height:6.2px;background:rgba(45,110,222,0.35)"></div><div class="m" style="left:1596.4px;top:884.7px;width:6.2px;height:6.2px;background:rgba(45,110,222,0.9)"></div><div class="m" style="left:1602.6px;top:884.7px;width:6.2px;height:6.2px;background:rgba(45,110,222,0.75)"></div><div class="m" style="left:1602.6px;top:890.9px;width:6.2px;height:6.2px;background:rgba(45,110,222,0.35)"></div><div class="m" style="left:1608.8px;top:884.7px;width:6.2px;height:6.2px;background:rgba(45,110,222,0.55)"></div><div class="m" style="left:1621.2px;top:878.5px;width:6.2px;height:6.2px;background:rgba(45,110,222,0.9)"></div><div class="m" style="left:1621.2px;top:890.9px;width:6.2px;height:6.2px;background:rgba(45,110,222,0.9)"></div><div class="m" style="left:1627.4px;top:878.5px;width:6.2px;height:6.2px;background:rgba(45,110,222,0.9)"></div><div class="m" style="left:1627.4px;top:884.7px;width:6.2px;height:6.2px;background:rgba(45,110,222,0.55)"></div><div class="m" style="left:1627.4px;top:890.9px;width:6.2px;height:6.2px;background:rgba(45,110,222,0.55)"></div><div class="m" style="left:1646.0px;top:878.5px;width:6.2px;height:6.2px;background:rgba(45,110,222,0.9)"></div><div class="m" style="left:1646.0px;top:884.7px;width:6.2px;height:6.2px;background:rgba(45,110,222,0.9)"></div><div class="m" style="left:1646.0px;top:890.9px;width:6.2px;height:6.2px;background:rgba(45,110,222,0.9)"></div><div class="m" style="left:1652.2px;top:884.7px;width:6.2px;height:6.2px;background:rgba(45,110,222,0.75)"></div><div class="m" style="left:1652.2px;top:890.9px;width:6.2px;height:6.2px;background:rgba(45,110,222,0.9)"></div>
<div class="tc" style="left:533px;top:957px">CW05027E3700210</div>
<div class="tc" style="left:749px;top:957px">6.0</div>
<div class="tc" style="left:819px;top:957px">V2.1.0</div>
<div class="tc" style="left:979px;top:957px">2023-12-27</div>
<div class="tc" style="left:1114px;top:957px">2024-01-15</div>
<div class="tc" style="left:1687px;top:957px">V1</div>
<div class="tc" style="left:1756px;top:957px">0</div>
<div class="tc rd" style="left:1812px;top:957px">100.000%</div>
<div class="tc rd" style="left:1944px;top:957px">已完成</div>
<div class="sb" style="left:2048px;top:944.75px;background:#42b4da">进度</div>
<div class="m" style="left:370.0px;top:959.0px;width:6.2px;height:6.2px;background:rgba(85,85,85,0.75)"></div><div class="m" style="left:370.0px;top:965.2px;width:6.2px;height:6.2px;background:rgba(85,85,85,0.75)"></div><div class="m" style="left:370.0px;top:971.4px;width:6.2px;height:6.2px;background:rgba(85,85,85,0.55)"></div><div class="m" style="left:386.0px;top:959.0px;width:6.2px;height:6.2px;background:rgba(85,85,85,0.55)"></div><div class="m" style="left:392.2px;top:965.2px;width:6.2px;height:6.2px;background:rgba(85,85,85,0.9)"></div><div class="m" style="left:398.4px;top:959.0px;width:6.2px;height:6.2px;background:rgba(85,85,85,0.55)"></div><div class="m" style="left:414.0px;top:959.0px;width:6.2px;height:6.2px;background:rgba(85,85,85,0.75)"></div><div class="m" style="left:414.0px;top:965.2px;width:6.2px;height:6.2px;background:rgba(85,85,85,0.9)"></div><div class="m" style="left:414.0px;top:971.4px;width:6.2px;height:6.2px;background:rgba(85,85,85,0.55)"></div><div class="m" style="left:420.2px;top:959.0px;width:6.2px;height:6.2px;background:rgba(85,85,85,0.35)"></div><div class="m" style="left:420.2px;top:971.4px;width:6.2px;height:6.2px;background:rgba(85,85,85,0.75)"></div><div class="m" style="left:426.4px;top:971.4px;width:6.2px;height:6.2px;background:rgba(85,85,85,0.75)"></div><div class="m" style="left:446.2px;top:959.0px;width:6.2px;height:6.2px;background:rgba(85,85,85,0.35)"></div><div class="m" style="left:452.4px;top:965.2px;width:6.2px;height:6.2px;background:rgba(85,85,85,0.9)"></div><div class="m" style="left:470.0px;top:959.0px;width:6.2px;height:6.2px;background:rgba(85,85,85,0.55)"></div><div class="m" style="left:470.0px;top:971.4px;width:6.2px;height:6.2px;background:rgba(85,85,85,0.55)"></div><div class="m" style="left:476.2px;top:971.4px;width:6.2px;height:6.2px;background:rgba(85,85,85,0.55)"></div>
<div class="m" style="left:1247.0px;top:965.2px;width:6.2px;height:6.2px;background:rgba(45,110,222,0.75)"></div><div class="m" style="left:1253.2px;top:959.0px;width:6.2px;height:6.2px;background:rgba(45,110,222,0.55)"></div><div class="m" style="left:1253.2px;top:965.2px;width:6.2px;height:6.2px;background:rgba(45,110,222,0.35)"></div><div class="m" style="left:1253.2px;top:971.4px;width:6.2px;height:6.2px;background:rgba(45,110,222,0.55)"></div><div class="m" style="left:1259.4px;top:959.0px;width:6.2px;height:6.2px;background:rgba(45,110,222,0.9)"></div><div class="m" style="left:1259.4px;top:965.2px;width:6.2px;height:6.2px;background:rgba(45,110,222,0.55)"></div><div class="m" style="left:1259.4px;top:971.4px;width:6.2px;height:6.2px;background:rgba(45,110,222,0.55)"></div><div class="m" style="left:1265.6px;top:959.0px;width:6.2px;height:6.2px;background:rgba(45,110,222,0.75)"></div><div class="m" style="left:1265.6px;top:965.2px;width:6.2px;height:6.2px;background:rgba(45,110,222,0.55)"></div><div class="m" style="left:1265.6px;top:971.4px;width:6.2px;height:6.2px;background:rgba(45,110,222,0.75)"></div><div class="m" style="left:1271.8px;top:965.2px;width:6.2px;height:6.2px;background:rgba(45,110,222,0.75)"></div><div class="m" style="left:1271.8px;top:971.4px;width:6.2px;height:6.2px;background:rgba(45,110,222,0.55)"></div><div class="m" style="left:1278.0px;top:965.2px;width:6.2px;height:6.2px;background:rgba(45,110,222,0.35)"></div><div class="m" style="left:1278.0px;top:971.4px;width:6.2px;height:6.2px;background:rgba(45,110,222,0.9)"></div><div class="m" style="left:1284.2px;top:959.0px;width:6.2px;height:6.2px;background:rgba(45,110,222,0.55)"></div><div class="m" style="left:1284.2px;top:965.2px;width:6.2px;height:6.2px;background:rgba(45,110,222,0.75)"></div><div class="m" style="left:1284.2px;top:971.4px;width:6.2px;height:6.2px;background:rgba(45,110,222,0.75)"></div><div class="m" style="left:1290.4px;top:971.4px;width:6.2px;height:6.2px;background:rgba(45,110,222,0.35)"></div><div class="m" style="left:1296.6px;top:959.0px;width:6.2px;height:6.2px;background:rgba(45,110,222,0.35)"></div><div class="m" style="left:1296.6px;top:971.4px;width:6.2px;height:6.2px;background:rgba(45,110,222,0.35)"></div><div class="m" style="left:1302.8px;top:959.0px;width:6.2px;height:6.2px;background:rgba(45,110,222,0.35)"></div><div class="m" style="left:1302.8px;top:971.4px;width:6.2px;height:6.2px;background:rgba(45,110,222,0.9)"></div><div class="m" style="left:1309.0px;top:959.0px;width:6.2px;height:6.2px;background:rgba(45,110,222,0.55)"></div><div class="m" style="left:1309.0px;top:965.2px;width:6.2px;height:6.2px;background:rgba(45,110,222,0.75)"></div><div class="m" style="left:1309.0px;top:971.4px;width:6.2px;height:6.2px;background:rgba(45,110,222,0.75)"></div><div class="m" style="left:1321.4px;top:959.0px;width:6.2px;height:6.2px;background:rgba(45,110,222,0.35)"></div><div class="m" style="left:1321.4px;top:971.4px;width:6.2px;height:6.2px;background:rgba(45,110,222,0.9)"></div><div class="m" style="left:1327.6px;top:959.0px;width:6.2px;height:6.2px;background:rgba(45,110,222,0.35)"></div><div class="m" style="left:1327.6px;top:965.2px;width:6.2px;height:6.2px;background:rgba(45,110,222,0.55)"></div><div class="m" style="left:1327.6px;top:971.4px;width:6.2px;height:6.2px;background:rgba(45,110,222,0.9)"></div><div class="m" style="left:1333.8px;top:965.2px;width:6.2px;height:6.2px;background:rgba(45,110,222,0.75)"></div><div class="m" style="left:1340.0px;top:959.0px;width:6.2px;height:6.2px;background:rgba(45,110,222,0.9)"></div><div class="m" style="left:1340.0px;top:965.2px;width:6.2px;height:6.2px;background:rgba(45,110,222,0.75)"></div><div class="m" style="left:1340.0px;top:971.4px;width:6.2px;height:6.2px;background:rgba(45,110,222,0.75)"></div><div class="m" style="left:1346.2px;top:965.2px;width:6.2px;height:6.2px;background:rgba(45,110,222,0.55)"></div><div class="m" style="left:1352.4px;top:959.0px;width:6.2px;height:6.2px;background:rgba(45,110,222,0.55)"></div><div class="m" style="left:1352.4px;top:965.2px;width:6.2px;height:6.2px;background:rgba(45,110,222,0.55)"></div><div class="m" style="left:1352.4px;top:971.4px;width:6.2px;height:6.2px;background:rgba(45,110,222,0.35)"></div><div class="m" style="left:1358.6px;top:959.0px;width:6.2px;height:6.2px;background:rgba(45,110,222,0.75)"></div><div class="m" style="left:1358.6px;top:965.2px;width:6.2px;height:6.2px;background:rgba(45,110,222,0.9)"></div><div class="m" style="left:1358.6px;top:971.4px;width:6.2px;height:6.2px;background:rgba(45,110,222,0.9)"></div><div class="m" style="left:1364.8px;top:959.0px;width:6.2px;height:6.2px;background:rgba(45,110,222,0.9)"></div><div class="m" style="left:1364.8px;top:965.2px;width:6.2px;height:6.2px;background:rgba(45,110,222,0.55)"></div><div class="m" style="left:1364.8px;top:971.4px;width:6.2px;height:6.2px;background:rgba(45,110,222,0.55)"></div><div class="m" style="left:1371.0px;top:959.0px;width:6.2px;height:6.2px;background:rgba(45,110,222,0.35)"></div><div class="m" style="left:1371.0px;top:965.2px;width:6.2px;height:6.2px;background:rgba(45,110,222,0.75)"></div><div class="m" style="left:1371.0px;top:971.4px;width:6.2px;height:6.2px;background:rgba(45,110,222,0.55)"></div><div class="m" style="left:1377.2px;top:959.0px;width:6.2px;height:6.2px;background:rgba(45,110,222,0.55)"></div><div class="m" style="left:1377.2px;top:971.4px;width:6.2px;height:6.2px;background:rgba(45,110,222,0.9)"></div><div class="m" style="left:1383.4px;top:965.2px;width:6.2px;height:6.2px;background:rgba(45,110,222,0.55)"></div><div class="m" style="left:1389.6px;top:959.0px;width:6.2px;height:6.2px;background:rgba(45,110,222,0.35)"></div><div class="m" style="left:1389.6px;top:965.2px;width:6.2px;height:6.2px;background:rgba(45,110,222,0.9)"></div><div class="m" style="left:1395.8px;top:959.0px;width:6.2px;height:6.2px;background:rgba(45,110,222,0.75)"></div><div class="m" style="left:1402.0px;top:965.2px;width:6.2px;height:6.2px;background:rgba(45,110,222,0.35)"></div><div class="m" style="left:1402.0px;top:971.4px;width:6.2px;height:6.2px;background:rgba(45,110,222,0.9)"></div><div class="m" style="left:1408.2px;top:959.0px;width:6.2px;height:6.2px;background:rgba(45,110,222,0.9)"></div><div class="m" style="left:1408.2px;top:965.2px;width:6.2px;height:6.2px;background:rgba(45,110,222,0.9)"></div><div class="m" style="left:1408.2px;top:971.4px;width:6.2px;height:6.2px;background:rgba(45,110,222,0.9)"></div><div class="m" style="left:1414.4px;top:965.2px;width:6.2px;height:6.2px;background:rgba(45,110,222,0.35)"></div><div class="m" style="left:1414.4px;top:971.4px;width:6.2px;height:6.2px;background:rgba(45,110,222,0.9)"></div><div class="m" style="left:1420.6px;top:959.0px;width:6.2px;height:6.2px;background:rgba(45,110,222,0.35)"></div><div class="m" style="left:1426.8px;top:959.0px;width:6.2px;height:6.2px;background:rgba(45,110,222,0.9)"></div><div class="m" style="left:1426.8px;top:965.2px;width:6.2px;height:6.2px;background:rgba(45,110,222,0.75)"></div><div class="m" style="left:1433.0px;top:959.0px;width:6.2px;height:6.2px;background:rgba(45,110,222,0.9)"></div><div class="m" style="left:1433.0px;top:971.4px;width:6.2px;height:6.2px;background:rgba(45,110,222,0.55)"></div><div class="m" style="left:1439.2px;top:971.4px;width:6.2px;height:6.2px;background:rgba(45,110,222,0.55)"></div><div class="m" style="left:1451.6px;top:971.4px;width:6.2px;height:6.2px;background:rgba(45,110,222,0.75)"></div><div class="m" style="left:1457.8px;top:959.0px;width:6.2px;height:6.2px;background:rgba(45,110,222,0.35)"></div><div class="m" style="left:1457.8px;top:971.4px;width:6.2px;height:6.2px;background:rgba(45,110,222,0.75)"></div><div class="m" style="left:1464.0px;top:959.0px;width:6.2px;height:6.2px;background:rgba(45,110,222,0.35)"></div><div class="m" style="left:1464.0px;top:971.4px;width:6.2px;height:6.2px;background:rgba(45,110,222,0.75)"></div><div class="m" style="left:1470.2px;top:965.2px;width:6.2px;height:6.2px;background:rgba(45,110,222,0.35)"></div><div class="m" style="left:1470.2px;top:971.4px;width:6.2px;height:6.2px;background:rgba(45,110,222,0.9)"></div><div class="m" style="left:1476.4px;top:965.2px;width:6.2px;height:6.2px;background:rgba(45,110,222,0.9)"></div><div class="m" style="left:1482.6px;top:965.2px;width:6.2px;height:6.2px;background:rgba(45,110,222,0.35)"></div><div class="m" style="left:1488.8px;top:959.0px;width:6.2px;height:6.2px;background:rgba(45,110,222,0.75)"></div><div class="m" style="left:1488.8px;top:965.2px;width:6.2px;height:6.2px;background:rgba(45,110,222,0.75)"></div><div class="m" style="left:1488.8px;top:971.4px;width:6.2px;height:6.2px;background:rgba(45,110,222,0.75)"></div><div class="m" style="left:1495.0px;top:965.2px;width:6.2px;height:6.2px;background:rgba(45,110,222,0.75)"></div><div class="m" style="left:1495.0px;top:971.4px;width:6.2px;height:6.2px;background:rgba(45,110,222,0.55)"></div><div class="m" style="left:1501.2px;top:965.2px;width:6.2px;height:6.2px;background:rgba(45,110,222,0.9)"></div><div class="m" style="left:1507.4px;top:959.0px;width:6.2px;height:6.2px;background:rgba(45,110,222,0.55)"></div><div class="m" style="left:1507.4px;top:965.2px;width:6.2px;height:6.2px;background:rgba(45,110,222,0.75)"></div><div class="m" style="left:1513.6px;top:965.2px;width:6.2px;height:6.2px;background:rgba(45,110,222,0.9)"></div><div class="m" style="left:1513.6px;top:971.4px;width:6.2px;height:6.2px;background:rgba(45,110,222,0.75)"></div><div class="m" style="left:1526.0px;top:965.2px;width:6.2px;height:6.2px;background:rgba(45,110,222,0.55)"></div><div class="m" style="left:1526.0px;top:971.4px;width:6.2px;height:6.2px;background:rgba(45,110,222,0.55)"></div><div class="m" style="left:1532.2px;top:959.0px;width:6.2px;height:6.2px;background:rgba(45,110,222,0.9)"></div><div class="m" style="left:1532.2px;top:965.2px;width:6.2px;height:6.2px;background:rgba(45,110,222,0.75)"></div><div class="m" style="left:1532.2px;top:971.4px;width:6.2px;height:6.2px;background:rgba(45,110,222,0.75)"></div><div class="m" style="left:1538.4px;top:965.2px;width:6.2px;height:6.2px;background:rgba(45,110,222,0.55)"></div><div class="m" style="left:1538.4px;top:971.4px;width:6.2px;height:6.2px;background:rgba(45,110,222,0.35)"></div><div class="m" style="left:1544.6px;top:971.4px;width:6.2px;height:6.2px;background:rgba(45,110,222,0.75)"></div><div class="m" style="left:1550.8px;top:965.2px;width:6.2px;height:6.2px;background:rgba(45,110,222,0.35)"></div><div class="m" style="left:1557.0px;top:959.0px;width:6.2px;height:6.2px;background:rgba(45,110,222,0.9)"></div><div class="m" style="left:1557.0px;top:965.2px;width:6.2px;height:6.2px;background:rgba(45,110,222,0.55)"></div><div class="m" style="left:1557.0px;top:971.4px;width:6.2px;height:6.2px;background:rgba(45,110,222,0.35)"></div><div class="m" style="left:1563.2px;top:959.0px;width:6.2px;height:6.2px;background:rgba(45,110,222,0.9)"></div><div class="m" style="left:1563.2px;top:965.2px;width:6.2px;height:6.2px;background:rgba(45,110,222,0.35)"></div><div class="m" style="left:1563.2px;top:971.4px;width:6.2px;height:6.2px;background:rgba(45,110,222,0.75)"></div><div class="m" style="left:1569.4px;top:965.2px;width:6.2px;height:6.2px;background:rgba(45,110,222,0.9)"></div><div class="m" style="left:1569.4px;top:971.4px;width:6.2px;height:6.2px;background:rgba(45,110,222,0.9)"></div><div class="m" style="left:1575.6px;top:959.0px;width:6.2px;height:6.2px;background:rgba(45,110,222,0.9)"></div><div class="m" style="left:1575.6px;top:971.4px;width:6.2px;height:6.2px;background:rgba(45,110,222,0.35)"></div><div class="m" style="left:1581.8px;top:959.0px;width:6.2px;height:6.2px;background:rgba(45,110,222,0.75)"></div><div class="m" style="left:1581.8px;top:965.2px;width:6.2px;height:6.2px;background:rgba(45,110,222,0.9)"></div><div class="m" style="left:1588.0px;top:959.0px;width:6.2px;height:6.2px;background:rgba(45,110,222,0.35)"></div><div class="m" style="left:1588.0px;top:971.4px;width:6.2px;height:6.2px;background:rgba(45,110,222,0.9)"></div><div class="m" style="left:1594.2px;top:959.0px;width:6.2px;height:6.2px;background:rgba(45,110,222,0.75)"></div><div class="m" style="left:1594.2px;top:965.2px;width:6.2px;height:6.2px;background:rgba(45,110,222,0.75)"></div><div class="m" style="left:1594.2px;top:971.4px;width:6.2px;height:6.2px;background:rgba(45,110,222,0.35)"></div><div class="m" style="left:1600.4px;top:959.0px;width:6.2px;height:6.2px;background:rgba(45,110,222,0.35)"></div><div class="m" style="left:1600.4px;top:965.2px;width:6.2px;height:6.2px;background:rgba(45,110,222,0.55)"></div><div class="m" style="left:1600.4px;top:971.4px;width:6.2px;height:6.2px;background:rgba(45,110,222,0.75)"></div><div class="m" style="left:1606.6px;top:959.0px;width:6.2px;height:6.2px;background:rgba(45,110,222,0.35)"></div><div class="m" style="left:1612.8px;top:959.0px;width:6.2px;height:6.2px;background:rgba(45,110,222,0.35)"></div><div class="m" style="left:1612.8px;top:971.4px;width:6.2px;height:6.2px;background:rgba(45,110,222,0.35)"></div><div class="m" style="left:1619.0px;top:959.0px;width:6.2px;height:6.2px;background:rgba(45,110,222,0.9)"></div><div class="m" style="left:1619.0px;top:965.2px;width:6.2px;height:6.2px;background:rgba(45,110,222,0.9)"></div><div class="m" style="left:1631.4px;top:965.2px;width:6.2px;height:6.2px;background:rgba(45,110,222,0.55)"></div><div class="m" style="left:1637.6px;top:971.4px;width:6.2px;height:6.2px;background:rgba(45,110,222,0.9)"></div><div class="m" style="left:1650.0px;top:959.0px;width:6.2px;height:6.2px;background:rgba(45,110,222,0.55)"></div><div class="m" style="left:1650.0px;top:965.2px;width:6.2px;height:6.2px;background:rgba(45,110,222,0.55)"></div><div class="m" style="left:1650.0px;top:971.4px;width:6.2px;height:6.2px;background:rgba(45,110,222,0.35)"></div>
<div class="tc" style="left:533px;top:1038px">CG05016E0002410</div>
<div class="tc" style="left:749px;top:1038px">6.0</div>
<div class="tc" style="left:819px;top:1038px">V4.1.0.135.00</div>
<div class="tc" style="left:979px;top:1038px">2024-01-01</div>
<div class="tc" style="left:1114px;top:1038px">2024-01-31</div>
<div class="tc" style="left:1687px;top:1038px">V1</div>
<div class="tc" style="left:1756px;top:1038px">6</div>
<div class="tc rd" style="left:1812px;top:1038px">100.000%</div>
<div class="tc rd" style="left:1944px;top:1038px">已完成</div>
<div class="sb" style="left:2048px;top:1025.25px;background:#42b4da">进度</div>
<div class="m" style="left:370.0px;top:1045.7px;width:6.2px;height:6.2px;background:rgba(85,85,85,0.55)"></div><div class="m" style="left:396.4px;top:1045.7px;width:6.2px;height:6.2px;background:rgba(85,85,85,0.55)"></div><div class="m" style="left:396.4px;top:1051.9px;width:6.2px;height:6.2px;background:rgba(85,85,85,0.75)"></div><div class="m" style="left:405.0px;top:1051.9px;width:6.2px;height:6.2px;background:rgba(85,85,85,0.75)"></div><div class="m" style="left:417.4px;top:1045.7px;width:6.2px;height:6.2px;background:rgba(85,85,85,0.35)"></div><div class="m" style="left:417.4px;top:1051.9px;width:6.2px;height:6.2px;background:rgba(85,85,85,0.55)"></div><div class="m" style="left:428.0px;top:1039.5px;width:6.2px;height:6.2px;background:rgba(85,85,85,0.35)"></div><div class="m" style="left:428.0px;top:1051.9px;width:6.2px;height:6.2px;background:rgba(85,85,85,0.75)"></div><div class="m" style="left:434.2px;top:1045.7px;width:6.2px;height:6.2px;background:rgba(85,85,85,0.9)"></div><div class="m" style="left:440.4px;top:1051.9px;width:6.2px;height:6.2px;background:rgba(85,85,85,0.35)"></div><div class="m" style="left:446.6px;top:1051.9px;width:6.2px;height:6.2px;background:rgba(85,85,85,0.55)"></div><div class="m" style="left:452.8px;top:1039.5px;width:6.2px;height:6.2px;background:rgba(85,85,85,0.55)"></div><div class="m" style="left:452.8px;top:1045.7px;width:6.2px;height:6.2px;background:rgba(85,85,85,0.35)"></div><div class="m" style="left:452.8px;top:1051.9px;width:6.2px;height:6.2px;background:rgba(85,85,85,0.35)"></div><div class="m" style="left:459.0px;top:1039.5px;width:6.2px;height:6.2px;background:rgba(85,85,85,0.35)"></div><div class="m" style="left:465.2px;top:1039.5px;width:6.2px;height:6.2px;background:rgba(85,85,85,0.35)"></div><div class="m" style="left:465.2px;top:1045.7px;width:6.2px;height:6.2px;background:rgba(85,85,85,0.9)"></div><div class="m" style="left:465.2px;top:1051.9px;width:6.2px;height:6.2px;background:rgba(85,85,85,0.35)"></div><div class="m" style="left:471.4px;top:1039.5px;width:6.2px;height:6.2px;background:rgba(85,85,85,0.75)"></div><div class="m" style="left:471.4px;top:1045.7px;width:6.2px;height:6.2px;background:rgba(85,85,85,0.75)"></div><div class="m" style="left:477.6px;top:1045.7px;width:6.2px;height:6.2px;background:rgba(85,85,85,0.9)"></div><div class="m" style="left:477.6px;top:1051.9px;width:6.2px;height:6.2px;background:rgba(85,85,85,0.55)"></div><div class="m" style="left:494.2px;top:1045.7px;width:6.2px;height:6.2px;background:rgba(85,85,85,0.75)"></div><div class="m" style="left:494.2px;top:1051.9px;width:6.2px;height:6.2px;background:rgba(85,85,85,0.35)"></div>
<div class="m" style="left:1247.0px;top:1051.9px;width:6.2px;height:6.2px;background:rgba(45,110,222,0.35)"></div><div class="m" style="left:1253.2px;top:1039.5px;width:6.2px;height:6.2px;background:rgba(45,110,222,0.9)"></div><div class="m" style="left:1259.4px;top:1039.5px;width:6.2px;height:6.2px;background:rgba(45,110,222,0.35)"></div><div class="m" style="left:1259.4px;top:1051.9px;width:6.2px;height:6.2px;background:rgba(45,110,222,0.75)"></div><div class="m" style="left:1265.6px;top:1045.7px;width:6.2px;height:6.2px;background:rgba(45,110,222,0.9)"></div><div class="m" style="left:1271.8px;top:1051.9px;width:6.2px;height:6.2px;background:rgba(45,110,222,0.75)"></div><div class="m" style="left:1282.0px;top:1045.7px;width:6.2px;height:6.2px;background:rgba(45,110,222,0.75)"></div><div class="m" style="left:1288.2px;top:1039.5px;width:6.2px;height:6.2px;background:rgba(45,110,222,0.35)"></div><div class="m" style="left:1288.2px;top:1045.7px;width:6.2px;height:6.2px;background:rgba(45,110,222,0.9)"></div><div class="m" style="left:1288.2px;top:1051.9px;width:6.2px;height:6.2px;background:rgba(45,110,222,0.75)"></div><div class="m" style="left:1294.4px;top:1039.5px;width:6.2px;height:6.2px;background:rgba(45,110,222,0.35)"></div><div class="m" style="left:1294.4px;top:1045.7px;width:6.2px;height:6.2px;background:rgba(45,110,222,0.75)"></div><div class="m" style="left:1310.0px;top:1045.7px;width:6.2px;height:6.2px;background:rgba(45,110,222,0.75)"></div><div class="m" style="left:1310.0px;top:1051.9px;width:6.2px;height:6.2px;background:rgba(45,110,222,0.75)"></div><div class="m" style="left:1316.2px;top:1039.5px;width:6.2px;height:6.2px;background:rgba(45,110,222,0.35)"></div><div class="m" style="left:1316.2px;top:1045.7px;width:6.2px;height:6.2px;background:rgba(45,110,222,0.55)"></div><div class="m" style="left:1322.4px;top:1039.5px;width:6.2px;height:6.2px;background:rgba(45,110,222,0.75)"></div><div class="m" style="left:1322.4px;top:1045.7px;width:6.2px;height:6.2px;background:rgba(45,110,222,0.55)"></div><div class="m" style="left:1328.6px;top:1039.5px;width:6.2px;height:6.2px;background:rgba(45,110,222,0.35)"></div><div class="m" style="left:1328.6px;top:1051.9px;width:6.2px;height:6.2px;background:rgba(45,110,222,0.9)"></div><div class="m" style="left:1334.8px;top:1039.5px;width:6.2px;height:6.2px;background:rgba(45,110,222,0.55)"></div><div class="m" style="left:1334.8px;top:1051.9px;width:6.2px;height:6.2px;background:rgba(45,110,222,0.35)"></div><div class="m" style="left:1341.0px;top:1039.5px;width:6.2px;height:6.2px;background:rgba(45,110,222,0.55)"></div><div class="m" style="left:1341.0px;top:1045.7px;width:6.2px;height:6.2px;background:rgba(45,110,222,0.35)"></div><div class="m" style="left:1347.2px;top:1039.5px;width:6.2px;height:6.2px;background:rgba(45,110,222,0.75)"></div><div class="m" style="left:1347.2px;top:1045.7px;width:6.2px;height:6.2px;background:rgba(45,110,222,0.35)"></div><div class="m" style="left:1347.2px;top:1051.9px;width:6.2px;height:6.2px;background:rgba(45,110,222,0.35)"></div><div class="m" style="left:1353.4px;top:1039.5px;width:6.2px;height:6.2px;background:rgba(45,110,222,0.55)"></div><div class="m" style="left:1353.4px;top:1045.7px;width:6.2px;height:6.2px;background:rgba(45,110,222,0.9)"></div><div class="m" style="left:1353.4px;top:1051.9px;width:6.2px;height:6.2px;background:rgba(45,110,222,0.35)"></div><div class="m" style="left:1359.6px;top:1039.5px;width:6.2px;height:6.2px;background:rgba(45,110,222,0.35)"></div><div class="m" style="left:1365.8px;top:1039.5px;width:6.2px;height:6.2px;background:rgba(45,110,222,0.35)"></div><div class="m" style="left:1365.8px;top:1051.9px;width:6.2px;height:6.2px;background:rgba(45,110,222,0.35)"></div><div class="m" style="left:1372.0px;top:1045.7px;width:6.2px;height:6.2px;background:rgba(45,110,222,0.9)"></div><div class="m" style="left:1372.0px;top:1051.9px;width:6.2px;height:6.2px;background:rgba(45,110,222,0.55)"></div><div class="m" style="left:1378.2px;top:1045.7px;width:6.2px;height:6.2px;background:rgba(45,110,222,0.75)"></div><div class="m" style="left:1378.2px;top:1051.9px;width:6.2px;height:6.2px;background:rgba(45,110,222,0.35)"></div><div class="m" style="left:1384.4px;top:1051.9px;width:6.2px;height:6.2px;background:rgba(45,110,222,0.9)"></div><div class="m" style="left:1390.6px;top:1039.5px;width:6.2px;height:6.2px;background:rgba(45,110,222,0.9)"></div><div class="m" style="left:1390.6px;top:1045.7px;width:6.2px;height:6.2px;background:rgba(45,110,222,0.9)"></div><div class="m" style="left:1390.6px;top:1051.9px;width:6.2px;height:6.2px;background:rgba(45,110,222,0.55)"></div><div class="m" style="left:1396.8px;top:1045.7px;width:6.2px;height:6.2px;background:rgba(45,110,222,0.35)"></div><div class="m" style="left:1396.8px;top:1051.9px;width:6.2px;height:6.2px;background:rgba(45,110,222,0.55)"></div><div class="m" style="left:1403.0px;top:1039.5px;width:6.2px;height:6.2px;background:rgba(45,110,222,0.9)"></div><div class="m" style="left:1403.0px;top:1045.7px;width:6.2px;height:6.2px;background:rgba(45,110,222,0.9)"></div><div class="m" style="left:1403.0px;top:1051.9px;width:6.2px;height:6.2px;background:rgba(45,110,222,0.9)"></div><div class="m" style="left:1409.2px;top:1039.5px;width:6.2px;height:6.2px;background:rgba(45,110,222,0.55)"></div><div class="m" style="left:1409.2px;top:1045.7px;width:6.2px;height:6.2px;background:rgba(45,110,222,0.9)"></div><div class="m" style="left:1409.2px;top:1051.9px;width:6.2px;height:6.2px;background:rgba(45,110,222,0.9)"></div><div class="m" style="left:1415.4px;top:1039.5px;width:6.2px;height:6.2px;background:rgba(45,110,222,0.75)"></div><div class="m" style="left:1415.4px;top:1045.7px;width:6.2px;height:6.2px;background:rgba(45,110,222,0.9)"></div><div class="m" style="left:1415.4px;top:1051.9px;width:6.2px;height:6.2px;background:rgba(45,110,222,0.75)"></div><div class="m" style="left:1421.6px;top:1051.9px;width:6.2px;height:6.2px;background:rgba(45,110,222,0.55)"></div><div class="m" style="left:1427.8px;top:1045.7px;width:6.2px;height:6.2px;background:rgba(45,110,222,0.35)"></div><div class="m" style="left:1427.8px;top:1051.9px;width:6.2px;height:6.2px;background:rgba(45,110,222,0.9)"></div><div class="m" style="left:1434.0px;top:1045.7px;width:6.2px;height:6.2px;background:rgba(45,110,222,0.9)"></div><div class="m" style="left:1434.0px;top:1051.9px;width:6.2px;height:6.2px;background:rgba(45,110,222,0.55)"></div><div class="m" style="left:1440.2px;top:1045.7px;width:6.2px;height:6.2px;background:rgba(45,110,222,0.75)"></div><div class="m" style="left:1440.2px;top:1051.9px;width:6.2px;height:6.2px;background:rgba(45,110,222,0.55)"></div>
<div class="abs" style="left:369px;top:522px;width:122px;height:3px;background:#fff"></div>
<div class="abs" style="left:369px;top:602.5px;width:122px;height:3px;background:#fff"></div>
<div class="abs" style="left:369px;top:683.5px;width:122px;height:3px;background:#fff"></div>
<div class="abs" style="left:369px;top:845.5px;width:122px;height:3px;background:#fff"></div>
<div class="abs" style="left:369px;top:1006.5px;width:122px;height:3px;background:#fff"></div>
<div class="abs" style="left:1237px;top:521px;width:423px;height:4px;background:#fff"></div>
<div class="abs" style="left:1237px;top:601.5px;width:423px;height:4px;background:#fff"></div>
<div class="abs" style="left:1237px;top:682.5px;width:423px;height:4px;background:#fff"></div>
<div class="abs" style="left:369px;top:764px;width:122px;height:3px;background:#d2d2d2"></div>
<div class="abs" style="left:1237px;top:764px;width:423px;height:3px;background:#d2d2d2"></div>
<div class="abs" style="left:369px;top:926px;width:122px;height:3px;background:#d2d2d2"></div>
<div class="abs" style="left:1237px;top:926px;width:423px;height:3px;background:#d2d2d2"></div>
<!--/TABLE-->
</body></html>
